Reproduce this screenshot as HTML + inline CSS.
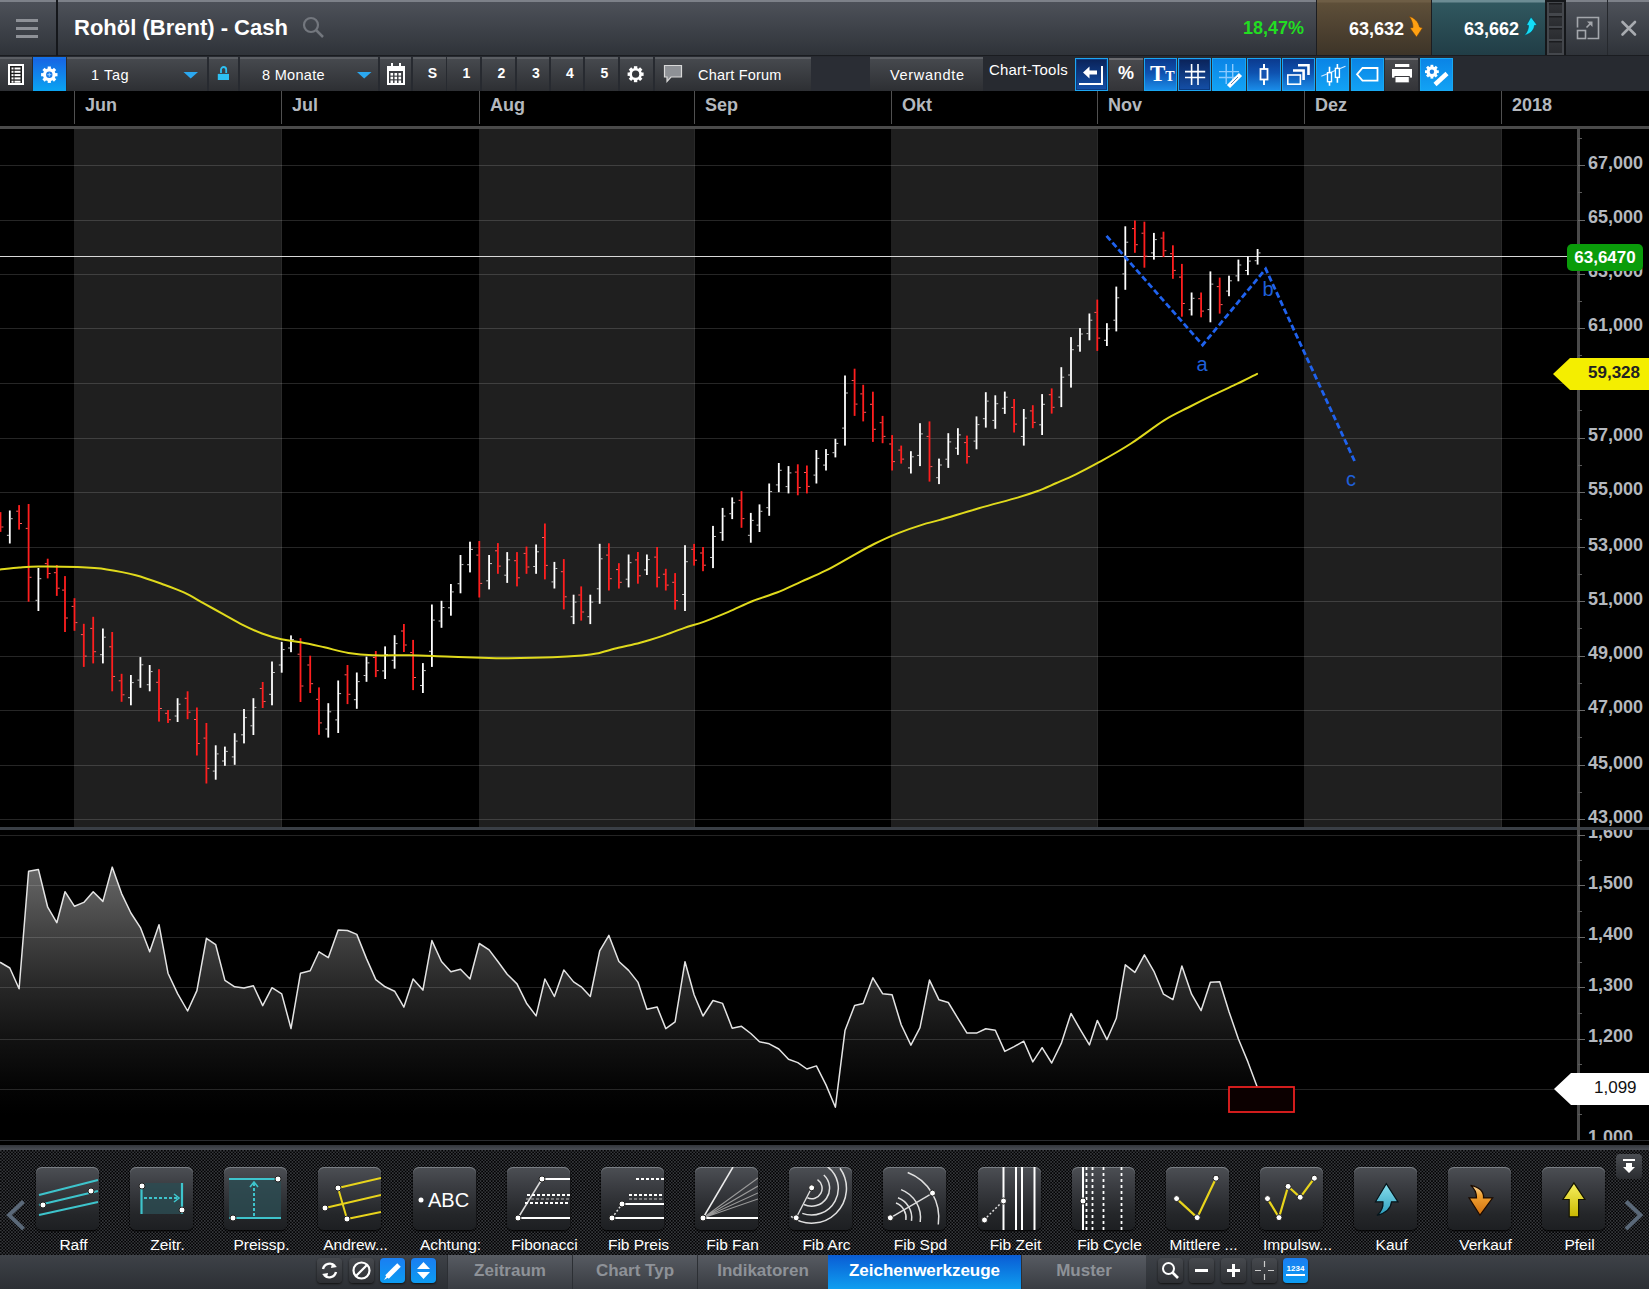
<!DOCTYPE html><html><head><meta charset="utf-8"><style>
*{margin:0;padding:0;box-sizing:border-box}
html,body{width:1649px;height:1289px;overflow:hidden;background:#000;font-family:"Liberation Sans",sans-serif}
.a{position:absolute}
#hdr{left:0;top:0;width:1649px;height:56px;background:linear-gradient(#4d5159,#2f3339);border-top:2px solid #7d8189;border-bottom:1px solid #1a1c20}
#tb{left:0;top:56px;width:1649px;height:35px;background:#272a30}
.btn{position:absolute;top:1px;height:34px;background:linear-gradient(#46494e,#2d2f33);border-top:2px solid #5d6065}
.txt{color:#fff;font-size:15px;white-space:nowrap}
#bt{left:0;top:1145px;width:1649px;height:110px;background:#1c1e21}
.ib{position:absolute;top:22px;width:63px;height:63px;border-radius:6px;background:linear-gradient(#44474c,#1d1f22);box-shadow:0 1px 2px #000}
.lbl{position:absolute;top:90px;width:94px;text-align:center;color:#fff;font-size:15px;white-space:nowrap;letter-spacing:-0.3px}
#tabs{left:0;top:1255px;width:1649px;height:34px;background:linear-gradient(#3c4046,#2c2f34)}
.tab{position:absolute;top:0;height:34px;background:linear-gradient(#4a4e54,#34373c);color:#8c9096;font-weight:bold;font-size:17px;text-align:center;line-height:32px;border-left:1px solid #2a2c30}
.sq{position:absolute;top:3px;width:25px;height:25px;border-radius:4px;background:linear-gradient(#45484d,#2b2d31);box-shadow:0 1px 1px #111}
.sqb{background:linear-gradient(#1a7ff0,#0a9af0)}
</style></head><body>
<div id="hdr" class="a">
</div>
<div class="a" style="left:16px;top:19px;width:22px;height:3px;background:#8e9197"></div>
<div class="a" style="left:16px;top:27px;width:22px;height:3px;background:#8e9197"></div>
<div class="a" style="left:16px;top:35px;width:22px;height:3px;background:#8e9197"></div>
<div class="a" style="left:56px;top:0;width:2px;height:56px;background:#15171b"></div>
<div class="a" style="left:74px;top:15px;font-size:22px;font-weight:bold;color:#fff;white-space:nowrap">Rohöl (Brent) - Cash</div>
<svg class="a" style="left:300px;top:14px" width="28" height="28"><circle cx="11" cy="11" r="7" fill="none" stroke="#73777e" stroke-width="2.2"/><line x1="16" y1="16" x2="23" y2="23" stroke="#73777e" stroke-width="2.5"/></svg>
<div class="a" style="left:1200px;top:18px;width:104px;text-align:right;font-size:18px;font-weight:bold;color:#22dd22">18,47%</div>
<div class="a" style="left:1316px;top:0;width:1px;height:56px;background:#1c1d20"></div>
<div class="a" style="left:1317px;top:0;width:114px;height:55px;background:linear-gradient(#6e5e46 0,#6e5e46 2px,#5e4f39 3px,#3d3428)"></div>
<div class="a" style="left:1340px;top:19px;width:64px;text-align:right;font-size:18px;font-weight:bold;color:#fff">63,632</div>
<svg class="a" style="left:1400px;top:10px" width="30" height="32"><path d="M9.3 6.4 C14 7.5 18.5 11.5 19.5 17 L22.5 18 L16.5 27 L10 18 L13 17.5 C13 13.5 11.5 9.5 9.3 6.4 Z" fill="#ffa012" stroke="#6a4010" stroke-width="0.6"/></svg>
<div class="a" style="left:1431px;top:0;width:1px;height:56px;background:#1c1d20"></div>
<div class="a" style="left:1432px;top:0;width:113px;height:55px;background:linear-gradient(#6c8c94 0,#6c8c94 2px,#30575f 3px,#213d46)"></div>
<div class="a" style="left:1455px;top:19px;width:64px;text-align:right;font-size:18px;font-weight:bold;color:#fff">63,662</div>
<svg class="a" style="left:1515px;top:10px" width="30" height="32"><path d="M16 7 L22 15 L19.5 15.5 C19 20 16 23.5 9.3 25.5 C12.5 22 13.5 18.5 13.5 15.5 L11.5 15 Z" fill="#14dcf6" stroke="#0a4050" stroke-width="0.6"/></svg>
<div class="a" style="left:1545px;top:0;width:21px;height:55px;background:#15171a"></div>
<div class="a" style="left:1547px;top:2px;width:17px;height:53px;background:#44474c"></div>
<div class="a" style="left:1549px;top:3px;width:13px;height:10px;background:linear-gradient(#1a1b1e 0,#1a1b1e 1px,#303236 2px,#2a2c30)"></div>
<div class="a" style="left:1549px;top:16px;width:13px;height:10px;background:linear-gradient(#1a1b1e 0,#1a1b1e 1px,#303236 2px,#2a2c30)"></div>
<div class="a" style="left:1549px;top:28px;width:13px;height:11px;background:linear-gradient(#1a1b1e 0,#1a1b1e 1px,#303236 2px,#2a2c30)"></div>
<div class="a" style="left:1549px;top:41px;width:13px;height:12px;background:linear-gradient(#1a1b1e 0,#1a1b1e 1px,#303236 2px,#2a2c30)"></div>
<div class="a" style="left:1607px;top:0;width:1px;height:55px;background:#25282d"></div>
<svg class="a" style="left:1570px;top:12px" width="36" height="32"><path d="M7.5 15.5 V5.5 H28.5 V26.5 H17.5" fill="none" stroke="#a4a7ac" stroke-width="1.6"/><rect x="7.5" y="18.5" width="8" height="8" fill="none" stroke="#a4a7ac" stroke-width="1.6"/><path d="M16.5 15.5 L21 11" stroke="#a4a7ac" stroke-width="1.6"/><path d="M17 9.5 H22.5 V15Z" fill="#a4a7ac"/></svg>
<svg class="a" style="left:1612px;top:12px" width="34" height="32"><path d="M10.5 10 L23 22.5 M23 10 L10.5 22.5" stroke="#a8abb0" stroke-width="2.6" stroke-linecap="round"/></svg>
<div id="tb" class="a"></div>
<div class="a" style="left:0px;top:57px;width:32px;height:34px;background:linear-gradient(#46494e,#2d2f33);border-top:2px solid #5b5e63;"></div>
<div class="a" style="left:33px;top:57px;width:33px;height:34px;background:linear-gradient(#46494e,#2d2f33);border-top:2px solid #5b5e63;background:linear-gradient(#1766e4,#0aa4f2);border-top:2px solid #1470e8"></div>
<div class="a" style="left:67px;top:57px;width:140px;height:34px;background:linear-gradient(#46494e,#2d2f33);border-top:2px solid #5b5e63;"></div>
<div class="a" style="left:209px;top:57px;width:29px;height:34px;background:linear-gradient(#46494e,#2d2f33);border-top:2px solid #5b5e63;"></div>
<div class="a" style="left:240px;top:57px;width:138px;height:34px;background:linear-gradient(#46494e,#2d2f33);border-top:2px solid #5b5e63;"></div>
<div class="a" style="left:380px;top:57px;width:31px;height:34px;background:linear-gradient(#46494e,#2d2f33);border-top:2px solid #5b5e63;"></div>
<div class="a" style="left:413px;top:57px;width:33px;height:34px;background:linear-gradient(#46494e,#2d2f33);border-top:2px solid #5b5e63;"></div>
<div class="a" style="left:447px;top:57px;width:33px;height:34px;background:linear-gradient(#46494e,#2d2f33);border-top:2px solid #5b5e63;"></div>
<div class="a" style="left:482px;top:57px;width:33px;height:34px;background:linear-gradient(#46494e,#2d2f33);border-top:2px solid #5b5e63;"></div>
<div class="a" style="left:517px;top:57px;width:32px;height:34px;background:linear-gradient(#46494e,#2d2f33);border-top:2px solid #5b5e63;"></div>
<div class="a" style="left:551px;top:57px;width:32px;height:34px;background:linear-gradient(#46494e,#2d2f33);border-top:2px solid #5b5e63;"></div>
<div class="a" style="left:585px;top:57px;width:33px;height:34px;background:linear-gradient(#46494e,#2d2f33);border-top:2px solid #5b5e63;"></div>
<div class="a" style="left:620px;top:57px;width:33px;height:34px;background:linear-gradient(#46494e,#2d2f33);border-top:2px solid #5b5e63;"></div>
<div class="a" style="left:655px;top:57px;width:156px;height:34px;background:linear-gradient(#46494e,#2d2f33);border-top:2px solid #5b5e63;"></div>
<div class="a" style="left:811px;top:57px;width:59px;height:34px;background:#2a2d34"></div>
<div class="a" style="left:870px;top:57px;width:113px;height:34px;background:linear-gradient(#46494e,#2d2f33);border-top:2px solid #5b5e63;"></div>
<div class="a" style="left:1075px;top:58px;width:33px;height:33px;background:linear-gradient(#0a2258,#1450a8);border:1.5px solid #1ea6f2;box-shadow:inset 0 0 0 1px #0a3a80"></div>
<div class="a" style="left:1109px;top:58px;width:34px;height:33px;background:linear-gradient(#48494d,#333438);border-top:2px solid #6a6b6f"></div>
<div class="a" style="left:1144px;top:58px;width:33px;height:33px;background:linear-gradient(#0b3a8e 0%,#0e52b0 45%,#1a8ce8 100%);border:1.5px solid #18a6f2"></div>
<div class="a" style="left:1178px;top:58px;width:33px;height:33px;background:linear-gradient(#0a2258,#1450a8);border:1.5px solid #1ea6f2;box-shadow:inset 0 0 0 1px #0a3a80"></div>
<div class="a" style="left:1212px;top:58px;width:34px;height:33px;background:linear-gradient(#0a84e6,#12a2f4);border:1.5px solid #18a8f2"></div>
<div class="a" style="left:1247px;top:58px;width:34px;height:33px;background:linear-gradient(#0b3a8e 0%,#0e52b0 45%,#1a8ce8 100%);border:1.5px solid #18a6f2"></div>
<div class="a" style="left:1282px;top:58px;width:33px;height:33px;background:linear-gradient(#0b3a8e 0%,#0e52b0 45%,#1a8ce8 100%);border:1.5px solid #18a6f2"></div>
<div class="a" style="left:1316px;top:58px;width:33px;height:33px;background:linear-gradient(#0a84e6,#12a2f4);border:1.5px solid #18a8f2"></div>
<div class="a" style="left:1351px;top:58px;width:33px;height:33px;background:linear-gradient(#0a84e6,#12a2f4);border:1.5px solid #18a8f2"></div>
<div class="a" style="left:1385px;top:58px;width:33px;height:33px;background:linear-gradient(#48494d,#333438);border-top:2px solid #6a6b6f"></div>
<div class="a" style="left:1420px;top:58px;width:33px;height:33px;background:linear-gradient(#0a84e6,#12a2f4);border:1.5px solid #18a8f2"></div>
<div class="a" style="left:91px;top:68px;color:#fff;font-size:14.5px;white-space:nowrap;line-height:1;letter-spacing:0.6px">1 Tag</div>
<div class="a" style="left:262px;top:68px;color:#fff;font-size:14.5px;white-space:nowrap;line-height:1;letter-spacing:0.3px">8 Monate</div>
<div class="a" style="left:416px;top:66px;width:33px;text-align:center;color:#fff;font-size:14px;font-weight:bold;line-height:1">S</div>
<div class="a" style="left:450px;top:66px;width:33px;text-align:center;color:#fff;font-size:14px;font-weight:bold;line-height:1">1</div>
<div class="a" style="left:485px;top:66px;width:33px;text-align:center;color:#fff;font-size:14px;font-weight:bold;line-height:1">2</div>
<div class="a" style="left:520px;top:66px;width:32px;text-align:center;color:#fff;font-size:14px;font-weight:bold;line-height:1">3</div>
<div class="a" style="left:554px;top:66px;width:32px;text-align:center;color:#fff;font-size:14px;font-weight:bold;line-height:1">4</div>
<div class="a" style="left:588px;top:66px;width:33px;text-align:center;color:#fff;font-size:14px;font-weight:bold;line-height:1">5</div>
<div class="a" style="left:698px;top:68px;color:#fff;font-size:14.5px;white-space:nowrap;line-height:1;letter-spacing:0.2px">Chart Forum</div>
<div class="a" style="left:890px;top:68px;color:#fff;font-size:14.5px;white-space:nowrap;line-height:1;letter-spacing:0.7px">Verwandte</div>
<div class="a" style="left:989px;top:62px;color:#fff;font-size:15px;white-space:nowrap;line-height:1;letter-spacing:0.2px">Chart-Tools</div>
<div class="a" style="left:1109px;top:64px;width:34px;text-align:center;color:#fff;font-weight:bold;font-size:18px;line-height:1">%</div>
<div class="a" style="left:1150px;top:62px;color:#fff;font-family:Liberation Serif;font-size:23px;line-height:1;font-weight:bold">T<span style="font-size:14px">T</span></div>
<svg class="a" style="left:0;top:0" width="1649" height="92"><rect x="9" y="65" width="14" height="19" fill="#1c1c1c" stroke="#fff" stroke-width="2"/><rect x="11.5" y="67.5" width="2" height="2" fill="#fff"/><rect x="14.5" y="67.5" width="6" height="2" fill="#fff"/><rect x="11.5" y="70.8" width="2" height="2" fill="#fff"/><rect x="14.5" y="70.8" width="6" height="2" fill="#fff"/><rect x="11.5" y="74.1" width="2" height="2" fill="#fff"/><rect x="14.5" y="74.1" width="6" height="2" fill="#fff"/><rect x="11.5" y="77.4" width="2" height="2" fill="#fff"/><rect x="14.5" y="77.4" width="6" height="2" fill="#fff"/><rect x="11.5" y="80.7" width="2" height="2" fill="#fff"/><rect x="14.5" y="80.7" width="6" height="2" fill="#fff"/><g fill="#fff"><rect x="47.70" y="66.50" width="3.20" height="16.40" transform="rotate(0.0 49.3 74.7)"/><rect x="47.70" y="66.50" width="3.20" height="16.40" transform="rotate(45.0 49.3 74.7)"/><rect x="47.70" y="66.50" width="3.20" height="16.40" transform="rotate(90.0 49.3 74.7)"/><rect x="47.70" y="66.50" width="3.20" height="16.40" transform="rotate(135.0 49.3 74.7)"/><circle cx="49.3" cy="74.7" r="6.40"/></g><circle cx="49.3" cy="74.7" r="3.2" fill="#1a7ae8"/><path d="M47.3 74.7 H51.3 M49.3 72.7 V76.7" stroke="#9cd0ff" stroke-width="1"/><path d="M183.5 72 H198 L190.7 78.5Z" fill="#2ba8f0"/><path d="M357 72 H371.5 L364.2 78.5Z" fill="#2ba8f0"/><path d="M221 73 V69.6 a2.6 2.6 0 0 1 5.2 0 V73" fill="none" stroke="#2ec0f2" stroke-width="1.8"/><rect x="217.8" y="73.9" width="11.2" height="6.1" fill="#2ec0f2"/><rect x="388" y="67" width="16" height="17" fill="none" stroke="#fff" stroke-width="2"/><rect x="388" y="67" width="16" height="4" fill="#fff"/><rect x="391" y="63" width="2" height="6" fill="#fff"/><rect x="399" y="63" width="2" height="6" fill="#fff"/><rect x="390.5" y="73.0" width="2.6" height="2.6" fill="#fff"/><rect x="394.5" y="73.0" width="2.6" height="2.6" fill="#fff"/><rect x="398.5" y="73.0" width="2.6" height="2.6" fill="#fff"/><rect x="390.5" y="76.7" width="2.6" height="2.6" fill="#fff"/><rect x="394.5" y="76.7" width="2.6" height="2.6" fill="#fff"/><rect x="398.5" y="76.7" width="2.6" height="2.6" fill="#fff"/><rect x="390.5" y="80.4" width="2.6" height="2.6" fill="#fff"/><rect x="394.5" y="80.4" width="2.6" height="2.6" fill="#fff"/><rect x="398.5" y="80.4" width="2.6" height="2.6" fill="#fff"/><g fill="#fff"><rect x="633.90" y="66.20" width="3.40" height="16.00" transform="rotate(0.0 635.6 74.2)"/><rect x="633.90" y="66.20" width="3.40" height="16.00" transform="rotate(45.0 635.6 74.2)"/><rect x="633.90" y="66.20" width="3.40" height="16.00" transform="rotate(90.0 635.6 74.2)"/><rect x="633.90" y="66.20" width="3.40" height="16.00" transform="rotate(135.0 635.6 74.2)"/><circle cx="635.6" cy="74.2" r="6.24"/></g><circle cx="635.6" cy="74.2" r="3.6" fill="#37393d"/><path d="M664.5 65.5 H681.5 V77 H671 L667 81.5 V77 H664.5Z" fill="#8e9196" stroke="#d8d8d8" stroke-width="1.2"/><path d="M1083 72.6 L1089.5 66.6 V70.6 H1097 V74.6 H1089.5 V78.6Z" fill="#fff"/><path d="M1079 84 H1102 V66" fill="none" stroke="#fff" stroke-width="2"/><path d="M1191.6 64 V85 M1198 64 V85 M1185 71.6 H1205.2 M1185 77.5 H1205.2" stroke="#fff" stroke-width="1.6"/><path d="M1226.2 64 V84 M1232.7 64 V82 M1219 71.6 H1239 M1219 77.5 H1236" stroke="#8ccaff" stroke-width="1.4"/><path d="M1228.5 86.5 L1240.5 74.5" stroke="#fff" stroke-width="4.5"/><path d="M1231 84 L1238 77" stroke="#3a6a9a" stroke-width="0.8"/><path d="M1264 64 V85" stroke="#fff" stroke-width="2"/><rect x="1260.5" y="69" width="7" height="10.5" fill="#1452b0" stroke="#fff" stroke-width="1.8"/><path d="M1298 65.3 H1308.5 V75" fill="none" stroke="#fff" stroke-width="2.6"/><path d="M1293 70.5 H1303.6 V80" fill="none" stroke="#fff" stroke-width="2.6"/><rect x="1287.8" y="75" width="12.6" height="9.2" fill="none" stroke="#fff" stroke-width="1.6"/><path d="M1321.3 76.3 L1345.5 66.2" stroke="#cfe8ff" stroke-width="1.2"/><path d="M1329.5 66.8 V85.8 M1337.4 63.9 V82.8" stroke="#fff" stroke-width="1.6"/><rect x="1327.5" y="72.7" width="4" height="9" fill="#0c8ae8" stroke="#fff" stroke-width="1.4"/><rect x="1335.4" y="68.4" width="4" height="9" fill="#0c8ae8" stroke="#fff" stroke-width="1.4"/><path d="M1357 74.3 L1362.5 68 H1377.5 V80.7 H1362.5Z" fill="none" stroke="#fff" stroke-width="1.8"/><rect x="1395" y="64" width="14.3" height="3" fill="#fff"/><rect x="1392" y="69" width="20" height="8.6" fill="#fff"/><rect x="1395" y="76.5" width="14.3" height="6.4" fill="#fff" stroke="#3a3b3f" stroke-width="1"/><g fill="#fff"><rect x="1430.50" y="64.80" width="2.80" height="13.80" transform="rotate(0.0 1431.9 71.7)"/><rect x="1430.50" y="64.80" width="2.80" height="13.80" transform="rotate(45.0 1431.9 71.7)"/><rect x="1430.50" y="64.80" width="2.80" height="13.80" transform="rotate(90.0 1431.9 71.7)"/><rect x="1430.50" y="64.80" width="2.80" height="13.80" transform="rotate(135.0 1431.9 71.7)"/><circle cx="1431.9" cy="71.7" r="5.38"/></g><circle cx="1431.9" cy="71.7" r="2.2" fill="#1a80e0"/><path d="M1435 84.5 L1447 73.5" stroke="#fff" stroke-width="4.5"/></svg>
<svg class="a" style="left:0;top:0" width="1649" height="1289">
<defs><linearGradient id="ig" gradientUnits="userSpaceOnUse" x1="0" y1="865" x2="0" y2="1115"><stop offset="0" stop-color="#686868"/><stop offset="0.288" stop-color="#404040"/><stop offset="0.488" stop-color="#272727"/><stop offset="0.696" stop-color="#121212"/><stop offset="0.896" stop-color="#040404"/><stop offset="1" stop-color="#000"/></linearGradient>
<clipPath id="cc"><rect x="0" y="129" width="1578" height="698"/></clipPath><clipPath id="ic"><rect x="0" y="830" width="1649" height="310"/></clipPath></defs>
<rect x="0" y="91" width="1649" height="36" fill="#000"/>
<rect x="0" y="126" width="1649" height="3" fill="#4a4a4a"/>
<rect x="74" y="91" width="1" height="33" fill="#505050"/>
<rect x="281" y="91" width="1" height="33" fill="#505050"/>
<rect x="479" y="91" width="1" height="33" fill="#505050"/>
<rect x="694" y="91" width="1" height="33" fill="#505050"/>
<rect x="891" y="91" width="1" height="33" fill="#505050"/>
<rect x="1097" y="91" width="1" height="33" fill="#505050"/>
<rect x="1304" y="91" width="1" height="33" fill="#505050"/>
<rect x="1501" y="91" width="1" height="33" fill="#505050"/>
<rect x="0" y="129" width="1649" height="698" fill="#000"/>
<rect x="74" y="129" width="207" height="698" fill="#1f1f1f"/>
<rect x="281" y="129" width="1" height="698" fill="#2a2a2a"/>
<rect x="479" y="129" width="215" height="698" fill="#1f1f1f"/>
<rect x="694" y="129" width="1" height="698" fill="#2a2a2a"/>
<rect x="891" y="129" width="206" height="698" fill="#1f1f1f"/>
<rect x="1097" y="129" width="1" height="698" fill="#2a2a2a"/>
<rect x="1304" y="129" width="197" height="698" fill="#1f1f1f"/>
<rect x="1501" y="129" width="1" height="698" fill="#2a2a2a"/>
<rect x="0" y="165" width="1578" height="1" fill="#fff" fill-opacity="0.15"/>
<rect x="0" y="220" width="1578" height="1" fill="#fff" fill-opacity="0.15"/>
<rect x="0" y="274" width="1578" height="1" fill="#fff" fill-opacity="0.15"/>
<rect x="0" y="328" width="1578" height="1" fill="#fff" fill-opacity="0.15"/>
<rect x="0" y="383" width="1578" height="1" fill="#fff" fill-opacity="0.15"/>
<rect x="0" y="438" width="1578" height="1" fill="#fff" fill-opacity="0.15"/>
<rect x="0" y="492" width="1578" height="1" fill="#fff" fill-opacity="0.15"/>
<rect x="0" y="547" width="1578" height="1" fill="#fff" fill-opacity="0.15"/>
<rect x="0" y="601" width="1578" height="1" fill="#fff" fill-opacity="0.15"/>
<rect x="0" y="656" width="1578" height="1" fill="#fff" fill-opacity="0.15"/>
<rect x="0" y="710" width="1578" height="1" fill="#fff" fill-opacity="0.15"/>
<rect x="0" y="765" width="1578" height="1" fill="#fff" fill-opacity="0.15"/>
<rect x="0" y="819" width="1578" height="1" fill="#fff" fill-opacity="0.15"/>
<rect x="0" y="256" width="1578" height="1" fill="#d8d8d8"/>
<g clip-path="url(#cc)">
<rect x="-0.4" y="512.1" width="1.8" height="19.8" fill="#ff1e1e"/>
<rect x="-2.4" y="516.5" width="2" height="1" fill="#ff6060"/>
<rect x="1.4" y="526.5" width="2" height="1" fill="#ff6060"/>
<rect x="8.9" y="510.5" width="1.8" height="33.0" fill="#ffffff"/>
<rect x="6.9" y="534.8" width="2" height="1" fill="#c8c8c8"/>
<rect x="10.7" y="518.2" width="2" height="1" fill="#c8c8c8"/>
<rect x="18.2" y="505.1" width="1.8" height="24.5" fill="#ff1e1e"/>
<rect x="16.2" y="510.7" width="2" height="1" fill="#ff6060"/>
<rect x="20.0" y="523.0" width="2" height="1" fill="#ff6060"/>
<rect x="27.7" y="504.0" width="1.8" height="97.7" fill="#ff1e1e"/>
<rect x="25.7" y="527.9" width="2" height="1" fill="#ff6060"/>
<rect x="29.5" y="576.8" width="2" height="1" fill="#ff6060"/>
<rect x="37.5" y="568.0" width="1.8" height="43.0" fill="#ffffff"/>
<rect x="35.5" y="599.8" width="2" height="1" fill="#c8c8c8"/>
<rect x="39.3" y="578.2" width="2" height="1" fill="#c8c8c8"/>
<rect x="46.8" y="558.7" width="1.8" height="19.7" fill="#ff1e1e"/>
<rect x="44.8" y="563.1" width="2" height="1" fill="#ff6060"/>
<rect x="48.6" y="573.0" width="2" height="1" fill="#ff6060"/>
<rect x="55.9" y="565.0" width="1.8" height="30.9" fill="#ff1e1e"/>
<rect x="53.9" y="572.2" width="2" height="1" fill="#ff6060"/>
<rect x="57.7" y="587.7" width="2" height="1" fill="#ff6060"/>
<rect x="64.1" y="576.1" width="1.8" height="55.9" fill="#ff1e1e"/>
<rect x="62.1" y="589.6" width="2" height="1" fill="#ff6060"/>
<rect x="65.9" y="617.5" width="2" height="1" fill="#ff6060"/>
<rect x="73.6" y="598.2" width="1.8" height="32.6" fill="#ff1e1e"/>
<rect x="71.6" y="605.9" width="2" height="1" fill="#ff6060"/>
<rect x="75.4" y="622.1" width="2" height="1" fill="#ff6060"/>
<rect x="82.9" y="623.8" width="1.8" height="43.1" fill="#ff1e1e"/>
<rect x="80.9" y="634.1" width="2" height="1" fill="#ff6060"/>
<rect x="84.7" y="655.6" width="2" height="1" fill="#ff6060"/>
<rect x="92.3" y="616.8" width="1.8" height="46.6" fill="#ff1e1e"/>
<rect x="90.3" y="627.9" width="2" height="1" fill="#ff6060"/>
<rect x="94.1" y="651.2" width="2" height="1" fill="#ff6060"/>
<rect x="102.0" y="628.5" width="1.8" height="34.9" fill="#ffffff"/>
<rect x="100.0" y="654.2" width="2" height="1" fill="#c8c8c8"/>
<rect x="103.8" y="636.7" width="2" height="1" fill="#c8c8c8"/>
<rect x="111.3" y="632.0" width="1.8" height="59.3" fill="#ff1e1e"/>
<rect x="109.3" y="646.3" width="2" height="1" fill="#ff6060"/>
<rect x="113.1" y="676.0" width="2" height="1" fill="#ff6060"/>
<rect x="120.7" y="673.8" width="1.8" height="28.0" fill="#ff1e1e"/>
<rect x="118.7" y="680.3" width="2" height="1" fill="#ff6060"/>
<rect x="122.5" y="694.3" width="2" height="1" fill="#ff6060"/>
<rect x="130.0" y="675.0" width="1.8" height="30.3" fill="#ffffff"/>
<rect x="128.0" y="697.2" width="2" height="1" fill="#c8c8c8"/>
<rect x="131.8" y="682.1" width="2" height="1" fill="#c8c8c8"/>
<rect x="139.5" y="657.1" width="1.8" height="30.7" fill="#ffffff"/>
<rect x="137.5" y="679.6" width="2" height="1" fill="#c8c8c8"/>
<rect x="141.3" y="664.3" width="2" height="1" fill="#c8c8c8"/>
<rect x="148.8" y="665.0" width="1.8" height="26.3" fill="#ffffff"/>
<rect x="146.8" y="684.2" width="2" height="1" fill="#c8c8c8"/>
<rect x="150.6" y="671.1" width="2" height="1" fill="#c8c8c8"/>
<rect x="158.1" y="669.2" width="1.8" height="52.4" fill="#ff1e1e"/>
<rect x="156.1" y="681.8" width="2" height="1" fill="#ff6060"/>
<rect x="159.9" y="708.0" width="2" height="1" fill="#ff6060"/>
<rect x="167.1" y="710.0" width="1.8" height="13.0" fill="#ff1e1e"/>
<rect x="165.1" y="712.8" width="2" height="1" fill="#ff6060"/>
<rect x="168.9" y="719.2" width="2" height="1" fill="#ff6060"/>
<rect x="176.7" y="698.2" width="1.8" height="23.8" fill="#ffffff"/>
<rect x="174.7" y="715.5" width="2" height="1" fill="#c8c8c8"/>
<rect x="178.5" y="703.7" width="2" height="1" fill="#c8c8c8"/>
<rect x="186.7" y="691.3" width="1.8" height="27.9" fill="#ff1e1e"/>
<rect x="184.7" y="697.8" width="2" height="1" fill="#ff6060"/>
<rect x="188.5" y="711.7" width="2" height="1" fill="#ff6060"/>
<rect x="196.0" y="707.5" width="1.8" height="48.0" fill="#ff1e1e"/>
<rect x="194.0" y="719.0" width="2" height="1" fill="#ff6060"/>
<rect x="197.8" y="743.0" width="2" height="1" fill="#ff6060"/>
<rect x="205.5" y="723.0" width="1.8" height="60.5" fill="#ff1e1e"/>
<rect x="203.5" y="737.6" width="2" height="1" fill="#ff6060"/>
<rect x="207.3" y="767.9" width="2" height="1" fill="#ff6060"/>
<rect x="214.8" y="745.3" width="1.8" height="34.4" fill="#ffffff"/>
<rect x="212.8" y="770.6" width="2" height="1" fill="#c8c8c8"/>
<rect x="216.6" y="753.4" width="2" height="1" fill="#c8c8c8"/>
<rect x="224.0" y="746.6" width="1.8" height="19.2" fill="#ffffff"/>
<rect x="222.0" y="760.5" width="2" height="1" fill="#c8c8c8"/>
<rect x="225.8" y="750.9" width="2" height="1" fill="#c8c8c8"/>
<rect x="233.8" y="733.2" width="1.8" height="31.6" fill="#ffffff"/>
<rect x="231.8" y="756.4" width="2" height="1" fill="#c8c8c8"/>
<rect x="235.6" y="740.6" width="2" height="1" fill="#c8c8c8"/>
<rect x="243.1" y="709.0" width="1.8" height="34.4" fill="#ffffff"/>
<rect x="241.1" y="734.3" width="2" height="1" fill="#c8c8c8"/>
<rect x="244.9" y="717.1" width="2" height="1" fill="#c8c8c8"/>
<rect x="252.5" y="698.2" width="1.8" height="36.8" fill="#ffffff"/>
<rect x="250.5" y="725.3" width="2" height="1" fill="#c8c8c8"/>
<rect x="254.3" y="706.9" width="2" height="1" fill="#c8c8c8"/>
<rect x="261.8" y="682.0" width="1.8" height="26.0" fill="#ff1e1e"/>
<rect x="259.8" y="688.0" width="2" height="1" fill="#ff6060"/>
<rect x="263.6" y="701.0" width="2" height="1" fill="#ff6060"/>
<rect x="271.1" y="661.5" width="1.8" height="43.8" fill="#ffffff"/>
<rect x="269.1" y="693.8" width="2" height="1" fill="#c8c8c8"/>
<rect x="272.9" y="672.0" width="2" height="1" fill="#c8c8c8"/>
<rect x="280.8" y="641.9" width="1.8" height="30.8" fill="#ffffff"/>
<rect x="278.8" y="664.5" width="2" height="1" fill="#c8c8c8"/>
<rect x="282.6" y="649.1" width="2" height="1" fill="#c8c8c8"/>
<rect x="290.1" y="635.4" width="1.8" height="16.8" fill="#ffffff"/>
<rect x="288.1" y="647.5" width="2" height="1" fill="#c8c8c8"/>
<rect x="291.9" y="639.1" width="2" height="1" fill="#c8c8c8"/>
<rect x="299.6" y="638.2" width="1.8" height="63.8" fill="#ff1e1e"/>
<rect x="297.6" y="653.7" width="2" height="1" fill="#ff6060"/>
<rect x="301.4" y="685.5" width="2" height="1" fill="#ff6060"/>
<rect x="309.3" y="655.7" width="1.8" height="37.3" fill="#ff1e1e"/>
<rect x="307.3" y="664.5" width="2" height="1" fill="#ff6060"/>
<rect x="311.1" y="683.2" width="2" height="1" fill="#ff6060"/>
<rect x="318.1" y="687.4" width="1.8" height="47.4" fill="#ff1e1e"/>
<rect x="316.1" y="698.8" width="2" height="1" fill="#ff6060"/>
<rect x="319.9" y="722.4" width="2" height="1" fill="#ff6060"/>
<rect x="327.4" y="703.2" width="1.8" height="34.4" fill="#ffffff"/>
<rect x="325.4" y="728.5" width="2" height="1" fill="#c8c8c8"/>
<rect x="329.2" y="711.3" width="2" height="1" fill="#c8c8c8"/>
<rect x="337.3" y="680.5" width="1.8" height="52.5" fill="#ffffff"/>
<rect x="335.3" y="719.4" width="2" height="1" fill="#c8c8c8"/>
<rect x="339.1" y="693.1" width="2" height="1" fill="#c8c8c8"/>
<rect x="346.6" y="665.0" width="1.8" height="39.1" fill="#ff1e1e"/>
<rect x="344.6" y="674.3" width="2" height="1" fill="#ff6060"/>
<rect x="348.4" y="693.8" width="2" height="1" fill="#ff6060"/>
<rect x="355.9" y="672.5" width="1.8" height="36.3" fill="#ffffff"/>
<rect x="353.9" y="699.2" width="2" height="1" fill="#c8c8c8"/>
<rect x="357.7" y="681.1" width="2" height="1" fill="#c8c8c8"/>
<rect x="365.6" y="656.6" width="1.8" height="25.2" fill="#ffffff"/>
<rect x="363.6" y="675.0" width="2" height="1" fill="#c8c8c8"/>
<rect x="367.4" y="662.4" width="2" height="1" fill="#c8c8c8"/>
<rect x="374.9" y="651.0" width="1.8" height="26.1" fill="#ff1e1e"/>
<rect x="372.9" y="657.0" width="2" height="1" fill="#ff6060"/>
<rect x="376.7" y="670.1" width="2" height="1" fill="#ff6060"/>
<rect x="384.2" y="646.4" width="1.8" height="32.6" fill="#ffffff"/>
<rect x="382.2" y="670.4" width="2" height="1" fill="#c8c8c8"/>
<rect x="386.0" y="654.0" width="2" height="1" fill="#c8c8c8"/>
<rect x="393.7" y="635.2" width="1.8" height="33.5" fill="#ffffff"/>
<rect x="391.7" y="659.8" width="2" height="1" fill="#c8c8c8"/>
<rect x="395.5" y="643.1" width="2" height="1" fill="#c8c8c8"/>
<rect x="403.0" y="624.0" width="1.8" height="28.0" fill="#ff1e1e"/>
<rect x="401.0" y="630.5" width="2" height="1" fill="#ff6060"/>
<rect x="404.8" y="644.5" width="2" height="1" fill="#ff6060"/>
<rect x="412.2" y="639.9" width="1.8" height="50.2" fill="#ff1e1e"/>
<rect x="410.2" y="652.0" width="2" height="1" fill="#ff6060"/>
<rect x="414.0" y="677.0" width="2" height="1" fill="#ff6060"/>
<rect x="422.0" y="663.1" width="1.8" height="29.9" fill="#ffffff"/>
<rect x="420.0" y="685.0" width="2" height="1" fill="#c8c8c8"/>
<rect x="423.8" y="670.1" width="2" height="1" fill="#c8c8c8"/>
<rect x="431.0" y="604.5" width="1.8" height="62.4" fill="#ffffff"/>
<rect x="429.0" y="650.8" width="2" height="1" fill="#c8c8c8"/>
<rect x="432.8" y="619.6" width="2" height="1" fill="#c8c8c8"/>
<rect x="440.6" y="600.8" width="1.8" height="27.0" fill="#ffffff"/>
<rect x="438.6" y="620.5" width="2" height="1" fill="#c8c8c8"/>
<rect x="442.4" y="607.0" width="2" height="1" fill="#c8c8c8"/>
<rect x="450.0" y="584.0" width="1.8" height="31.7" fill="#ffffff"/>
<rect x="448.0" y="607.3" width="2" height="1" fill="#c8c8c8"/>
<rect x="451.8" y="591.4" width="2" height="1" fill="#c8c8c8"/>
<rect x="459.6" y="555.0" width="1.8" height="38.3" fill="#ffffff"/>
<rect x="457.6" y="583.2" width="2" height="1" fill="#c8c8c8"/>
<rect x="461.4" y="564.1" width="2" height="1" fill="#c8c8c8"/>
<rect x="469.1" y="541.7" width="1.8" height="30.7" fill="#ffffff"/>
<rect x="467.1" y="564.2" width="2" height="1" fill="#c8c8c8"/>
<rect x="470.9" y="548.9" width="2" height="1" fill="#c8c8c8"/>
<rect x="478.4" y="541.0" width="1.8" height="56.5" fill="#ff1e1e"/>
<rect x="476.4" y="554.6" width="2" height="1" fill="#ff6060"/>
<rect x="480.2" y="582.9" width="2" height="1" fill="#ff6060"/>
<rect x="488.2" y="555.0" width="1.8" height="34.4" fill="#ffffff"/>
<rect x="486.2" y="580.3" width="2" height="1" fill="#c8c8c8"/>
<rect x="490.0" y="563.1" width="2" height="1" fill="#c8c8c8"/>
<rect x="497.0" y="543.1" width="1.8" height="30.7" fill="#ff1e1e"/>
<rect x="495.0" y="550.3" width="2" height="1" fill="#ff6060"/>
<rect x="498.8" y="565.6" width="2" height="1" fill="#ff6060"/>
<rect x="506.3" y="552.1" width="1.8" height="30.8" fill="#ffffff"/>
<rect x="504.3" y="574.7" width="2" height="1" fill="#c8c8c8"/>
<rect x="508.1" y="559.3" width="2" height="1" fill="#c8c8c8"/>
<rect x="516.1" y="552.1" width="1.8" height="34.3" fill="#ff1e1e"/>
<rect x="514.1" y="560.2" width="2" height="1" fill="#ff6060"/>
<rect x="517.9" y="577.3" width="2" height="1" fill="#ff6060"/>
<rect x="525.6" y="546.6" width="1.8" height="27.2" fill="#ff1e1e"/>
<rect x="523.6" y="552.9" width="2" height="1" fill="#ff6060"/>
<rect x="527.4" y="566.5" width="2" height="1" fill="#ff6060"/>
<rect x="535.2" y="544.5" width="1.8" height="29.3" fill="#ffffff"/>
<rect x="533.2" y="566.0" width="2" height="1" fill="#c8c8c8"/>
<rect x="537.0" y="551.3" width="2" height="1" fill="#c8c8c8"/>
<rect x="544.0" y="523.5" width="1.8" height="55.9" fill="#ff1e1e"/>
<rect x="542.0" y="537.0" width="2" height="1" fill="#ff6060"/>
<rect x="545.8" y="564.9" width="2" height="1" fill="#ff6060"/>
<rect x="553.5" y="561.9" width="1.8" height="26.6" fill="#ffffff"/>
<rect x="551.5" y="581.4" width="2" height="1" fill="#c8c8c8"/>
<rect x="555.3" y="568.0" width="2" height="1" fill="#c8c8c8"/>
<rect x="562.9" y="559.1" width="1.8" height="50.3" fill="#ff1e1e"/>
<rect x="560.9" y="571.2" width="2" height="1" fill="#ff6060"/>
<rect x="564.7" y="596.3" width="2" height="1" fill="#ff6060"/>
<rect x="572.7" y="594.7" width="1.8" height="29.4" fill="#ffffff"/>
<rect x="570.7" y="616.2" width="2" height="1" fill="#c8c8c8"/>
<rect x="574.5" y="601.6" width="2" height="1" fill="#c8c8c8"/>
<rect x="580.3" y="586.4" width="1.8" height="34.2" fill="#ff1e1e"/>
<rect x="578.3" y="594.5" width="2" height="1" fill="#ff6060"/>
<rect x="582.1" y="611.5" width="2" height="1" fill="#ff6060"/>
<rect x="589.4" y="594.7" width="1.8" height="29.4" fill="#ffffff"/>
<rect x="587.4" y="616.2" width="2" height="1" fill="#c8c8c8"/>
<rect x="591.2" y="601.6" width="2" height="1" fill="#c8c8c8"/>
<rect x="598.8" y="543.8" width="1.8" height="60.0" fill="#ffffff"/>
<rect x="596.8" y="588.3" width="2" height="1" fill="#c8c8c8"/>
<rect x="600.6" y="558.3" width="2" height="1" fill="#c8c8c8"/>
<rect x="608.0" y="543.3" width="1.8" height="47.2" fill="#ff1e1e"/>
<rect x="606.0" y="554.6" width="2" height="1" fill="#ff6060"/>
<rect x="609.8" y="578.2" width="2" height="1" fill="#ff6060"/>
<rect x="618.0" y="563.2" width="1.8" height="25.4" fill="#ff1e1e"/>
<rect x="616.0" y="569.1" width="2" height="1" fill="#ff6060"/>
<rect x="619.8" y="581.8" width="2" height="1" fill="#ff6060"/>
<rect x="627.7" y="554.5" width="1.8" height="32.9" fill="#ffffff"/>
<rect x="625.7" y="578.7" width="2" height="1" fill="#c8c8c8"/>
<rect x="629.5" y="562.2" width="2" height="1" fill="#c8c8c8"/>
<rect x="637.0" y="552.0" width="1.8" height="31.7" fill="#ff1e1e"/>
<rect x="635.0" y="559.4" width="2" height="1" fill="#ff6060"/>
<rect x="638.8" y="575.3" width="2" height="1" fill="#ff6060"/>
<rect x="646.0" y="554.5" width="1.8" height="20.5" fill="#ffffff"/>
<rect x="644.0" y="569.4" width="2" height="1" fill="#c8c8c8"/>
<rect x="647.8" y="559.1" width="2" height="1" fill="#c8c8c8"/>
<rect x="656.2" y="547.0" width="1.8" height="40.4" fill="#ff1e1e"/>
<rect x="654.2" y="556.6" width="2" height="1" fill="#ff6060"/>
<rect x="658.0" y="576.8" width="2" height="1" fill="#ff6060"/>
<rect x="664.9" y="568.8" width="1.8" height="21.7" fill="#ff1e1e"/>
<rect x="662.9" y="573.7" width="2" height="1" fill="#ff6060"/>
<rect x="666.7" y="584.6" width="2" height="1" fill="#ff6060"/>
<rect x="674.2" y="573.1" width="1.8" height="36.6" fill="#ff1e1e"/>
<rect x="672.2" y="581.8" width="2" height="1" fill="#ff6060"/>
<rect x="676.0" y="600.1" width="2" height="1" fill="#ff6060"/>
<rect x="684.1" y="545.2" width="1.8" height="65.8" fill="#ffffff"/>
<rect x="682.1" y="594.0" width="2" height="1" fill="#c8c8c8"/>
<rect x="685.9" y="561.2" width="2" height="1" fill="#c8c8c8"/>
<rect x="693.2" y="543.9" width="1.8" height="21.7" fill="#ff1e1e"/>
<rect x="691.2" y="548.8" width="2" height="1" fill="#ff6060"/>
<rect x="695.0" y="559.7" width="2" height="1" fill="#ff6060"/>
<rect x="702.1" y="547.0" width="1.8" height="24.2" fill="#ff1e1e"/>
<rect x="700.1" y="552.5" width="2" height="1" fill="#ff6060"/>
<rect x="703.9" y="564.7" width="2" height="1" fill="#ff6060"/>
<rect x="712.1" y="525.9" width="1.8" height="42.2" fill="#ffffff"/>
<rect x="710.1" y="557.0" width="2" height="1" fill="#c8c8c8"/>
<rect x="713.9" y="536.0" width="2" height="1" fill="#c8c8c8"/>
<rect x="721.7" y="507.9" width="1.8" height="32.9" fill="#ffffff"/>
<rect x="719.7" y="532.1" width="2" height="1" fill="#c8c8c8"/>
<rect x="723.5" y="515.6" width="2" height="1" fill="#c8c8c8"/>
<rect x="731.3" y="497.4" width="1.8" height="21.7" fill="#ffffff"/>
<rect x="729.3" y="513.2" width="2" height="1" fill="#c8c8c8"/>
<rect x="733.1" y="502.3" width="2" height="1" fill="#c8c8c8"/>
<rect x="740.6" y="491.2" width="1.8" height="36.6" fill="#ff1e1e"/>
<rect x="738.6" y="499.8" width="2" height="1" fill="#ff6060"/>
<rect x="742.4" y="518.1" width="2" height="1" fill="#ff6060"/>
<rect x="749.9" y="512.9" width="1.8" height="29.8" fill="#ffffff"/>
<rect x="747.9" y="534.8" width="2" height="1" fill="#c8c8c8"/>
<rect x="751.7" y="519.9" width="2" height="1" fill="#c8c8c8"/>
<rect x="758.6" y="504.4" width="1.8" height="27.6" fill="#ffffff"/>
<rect x="756.6" y="524.6" width="2" height="1" fill="#c8c8c8"/>
<rect x="760.4" y="510.8" width="2" height="1" fill="#c8c8c8"/>
<rect x="768.3" y="483.5" width="1.8" height="32.3" fill="#ffffff"/>
<rect x="766.3" y="507.2" width="2" height="1" fill="#c8c8c8"/>
<rect x="770.1" y="491.1" width="2" height="1" fill="#c8c8c8"/>
<rect x="777.9" y="463.0" width="1.8" height="29.2" fill="#ffffff"/>
<rect x="775.9" y="484.4" width="2" height="1" fill="#c8c8c8"/>
<rect x="779.7" y="469.8" width="2" height="1" fill="#c8c8c8"/>
<rect x="787.6" y="466.1" width="1.8" height="27.3" fill="#ffffff"/>
<rect x="785.6" y="486.1" width="2" height="1" fill="#c8c8c8"/>
<rect x="789.4" y="472.4" width="2" height="1" fill="#c8c8c8"/>
<rect x="796.9" y="464.3" width="1.8" height="31.0" fill="#ff1e1e"/>
<rect x="794.9" y="471.6" width="2" height="1" fill="#ff6060"/>
<rect x="798.7" y="487.1" width="2" height="1" fill="#ff6060"/>
<rect x="806.0" y="465.5" width="1.8" height="27.9" fill="#ff1e1e"/>
<rect x="804.0" y="472.0" width="2" height="1" fill="#ff6060"/>
<rect x="807.8" y="485.9" width="2" height="1" fill="#ff6060"/>
<rect x="815.5" y="450.0" width="1.8" height="33.5" fill="#ffffff"/>
<rect x="813.5" y="474.6" width="2" height="1" fill="#c8c8c8"/>
<rect x="817.3" y="457.9" width="2" height="1" fill="#c8c8c8"/>
<rect x="825.1" y="449.1" width="1.8" height="21.4" fill="#ffffff"/>
<rect x="823.1" y="464.6" width="2" height="1" fill="#c8c8c8"/>
<rect x="826.9" y="454.0" width="2" height="1" fill="#c8c8c8"/>
<rect x="834.5" y="438.8" width="1.8" height="18.6" fill="#ffffff"/>
<rect x="832.5" y="452.2" width="2" height="1" fill="#c8c8c8"/>
<rect x="836.3" y="442.9" width="2" height="1" fill="#c8c8c8"/>
<rect x="844.1" y="375.5" width="1.8" height="70.1" fill="#ffffff"/>
<rect x="842.1" y="427.6" width="2" height="1" fill="#c8c8c8"/>
<rect x="845.9" y="392.5" width="2" height="1" fill="#c8c8c8"/>
<rect x="853.7" y="368.7" width="1.8" height="47.2" fill="#ff1e1e"/>
<rect x="851.7" y="380.0" width="2" height="1" fill="#ff6060"/>
<rect x="855.5" y="403.6" width="2" height="1" fill="#ff6060"/>
<rect x="862.3" y="384.8" width="1.8" height="36.6" fill="#ff1e1e"/>
<rect x="860.3" y="393.4" width="2" height="1" fill="#ff6060"/>
<rect x="864.1" y="411.8" width="2" height="1" fill="#ff6060"/>
<rect x="872.0" y="391.7" width="1.8" height="50.2" fill="#ff1e1e"/>
<rect x="870.0" y="403.8" width="2" height="1" fill="#ff6060"/>
<rect x="873.8" y="428.8" width="2" height="1" fill="#ff6060"/>
<rect x="881.7" y="415.9" width="1.8" height="27.3" fill="#ff1e1e"/>
<rect x="879.7" y="422.2" width="2" height="1" fill="#ff6060"/>
<rect x="883.5" y="435.9" width="2" height="1" fill="#ff6060"/>
<rect x="891.2" y="435.1" width="1.8" height="35.4" fill="#ff1e1e"/>
<rect x="889.2" y="443.5" width="2" height="1" fill="#ff6060"/>
<rect x="893.0" y="461.1" width="2" height="1" fill="#ff6060"/>
<rect x="900.3" y="445.6" width="1.8" height="18.0" fill="#ff1e1e"/>
<rect x="898.3" y="449.6" width="2" height="1" fill="#ff6060"/>
<rect x="902.1" y="458.6" width="2" height="1" fill="#ff6060"/>
<rect x="910.0" y="451.2" width="1.8" height="22.3" fill="#ffffff"/>
<rect x="908.0" y="467.4" width="2" height="1" fill="#c8c8c8"/>
<rect x="911.8" y="456.3" width="2" height="1" fill="#c8c8c8"/>
<rect x="919.1" y="423.2" width="1.8" height="42.9" fill="#ffffff"/>
<rect x="917.1" y="454.9" width="2" height="1" fill="#c8c8c8"/>
<rect x="920.9" y="433.4" width="2" height="1" fill="#c8c8c8"/>
<rect x="928.6" y="421.4" width="1.8" height="60.2" fill="#ff1e1e"/>
<rect x="926.6" y="435.9" width="2" height="1" fill="#ff6060"/>
<rect x="930.4" y="466.1" width="2" height="1" fill="#ff6060"/>
<rect x="938.1" y="458.6" width="1.8" height="25.5" fill="#ffffff"/>
<rect x="936.1" y="477.2" width="2" height="1" fill="#c8c8c8"/>
<rect x="939.9" y="464.5" width="2" height="1" fill="#c8c8c8"/>
<rect x="947.4" y="433.2" width="1.8" height="34.7" fill="#ffffff"/>
<rect x="945.4" y="458.7" width="2" height="1" fill="#c8c8c8"/>
<rect x="949.2" y="441.4" width="2" height="1" fill="#c8c8c8"/>
<rect x="957.0" y="428.2" width="1.8" height="26.7" fill="#ffffff"/>
<rect x="955.0" y="447.7" width="2" height="1" fill="#c8c8c8"/>
<rect x="958.8" y="434.4" width="2" height="1" fill="#c8c8c8"/>
<rect x="966.1" y="435.6" width="1.8" height="28.0" fill="#ff1e1e"/>
<rect x="964.1" y="442.1" width="2" height="1" fill="#ff6060"/>
<rect x="967.9" y="456.1" width="2" height="1" fill="#ff6060"/>
<rect x="975.6" y="416.4" width="1.8" height="32.9" fill="#ffffff"/>
<rect x="973.6" y="440.6" width="2" height="1" fill="#c8c8c8"/>
<rect x="977.4" y="424.1" width="2" height="1" fill="#c8c8c8"/>
<rect x="984.9" y="392.2" width="1.8" height="35.4" fill="#ffffff"/>
<rect x="982.9" y="418.2" width="2" height="1" fill="#c8c8c8"/>
<rect x="986.7" y="400.6" width="2" height="1" fill="#c8c8c8"/>
<rect x="994.4" y="395.3" width="1.8" height="33.5" fill="#ffffff"/>
<rect x="992.4" y="419.9" width="2" height="1" fill="#c8c8c8"/>
<rect x="996.2" y="403.2" width="2" height="1" fill="#c8c8c8"/>
<rect x="1003.9" y="391.6" width="1.8" height="22.3" fill="#ffffff"/>
<rect x="1001.9" y="407.8" width="2" height="1" fill="#c8c8c8"/>
<rect x="1005.7" y="396.7" width="2" height="1" fill="#c8c8c8"/>
<rect x="1013.2" y="399.0" width="1.8" height="33.5" fill="#ff1e1e"/>
<rect x="1011.2" y="406.9" width="2" height="1" fill="#ff6060"/>
<rect x="1015.0" y="423.6" width="2" height="1" fill="#ff6060"/>
<rect x="1022.9" y="409.0" width="1.8" height="36.6" fill="#ffffff"/>
<rect x="1020.9" y="436.0" width="2" height="1" fill="#c8c8c8"/>
<rect x="1024.7" y="417.6" width="2" height="1" fill="#c8c8c8"/>
<rect x="1031.9" y="405.2" width="1.8" height="23.0" fill="#ff1e1e"/>
<rect x="1029.9" y="410.4" width="2" height="1" fill="#ff6060"/>
<rect x="1033.7" y="421.9" width="2" height="1" fill="#ff6060"/>
<rect x="1041.2" y="394.1" width="1.8" height="40.9" fill="#ffffff"/>
<rect x="1039.2" y="424.3" width="2" height="1" fill="#c8c8c8"/>
<rect x="1043.0" y="403.8" width="2" height="1" fill="#c8c8c8"/>
<rect x="1050.8" y="388.4" width="1.8" height="25.2" fill="#ff1e1e"/>
<rect x="1048.8" y="394.2" width="2" height="1" fill="#ff6060"/>
<rect x="1052.6" y="406.8" width="2" height="1" fill="#ff6060"/>
<rect x="1060.4" y="367.2" width="1.8" height="39.9" fill="#ffffff"/>
<rect x="1058.4" y="396.6" width="2" height="1" fill="#c8c8c8"/>
<rect x="1062.2" y="376.7" width="2" height="1" fill="#c8c8c8"/>
<rect x="1070.1" y="337.1" width="1.8" height="50.5" fill="#ffffff"/>
<rect x="1068.1" y="374.5" width="2" height="1" fill="#c8c8c8"/>
<rect x="1071.9" y="349.2" width="2" height="1" fill="#c8c8c8"/>
<rect x="1079.1" y="328.1" width="1.8" height="23.6" fill="#ffffff"/>
<rect x="1077.1" y="345.3" width="2" height="1" fill="#c8c8c8"/>
<rect x="1080.9" y="333.5" width="2" height="1" fill="#c8c8c8"/>
<rect x="1088.5" y="313.5" width="1.8" height="26.8" fill="#ffffff"/>
<rect x="1086.5" y="333.1" width="2" height="1" fill="#c8c8c8"/>
<rect x="1090.3" y="319.7" width="2" height="1" fill="#c8c8c8"/>
<rect x="1096.4" y="299.6" width="1.8" height="51.3" fill="#ff1e1e"/>
<rect x="1094.4" y="311.9" width="2" height="1" fill="#ff6060"/>
<rect x="1098.2" y="337.6" width="2" height="1" fill="#ff6060"/>
<rect x="1106.0" y="323.2" width="1.8" height="22.8" fill="#ffffff"/>
<rect x="1104.0" y="339.8" width="2" height="1" fill="#c8c8c8"/>
<rect x="1107.8" y="328.4" width="2" height="1" fill="#c8c8c8"/>
<rect x="1115.4" y="286.6" width="1.8" height="44.8" fill="#ffffff"/>
<rect x="1113.4" y="319.7" width="2" height="1" fill="#c8c8c8"/>
<rect x="1117.2" y="297.3" width="2" height="1" fill="#c8c8c8"/>
<rect x="1124.4" y="226.3" width="1.8" height="63.5" fill="#ffffff"/>
<rect x="1122.4" y="273.4" width="2" height="1" fill="#c8c8c8"/>
<rect x="1126.2" y="241.7" width="2" height="1" fill="#c8c8c8"/>
<rect x="1134.0" y="220.5" width="1.8" height="32.3" fill="#ff1e1e"/>
<rect x="1132.0" y="228.1" width="2" height="1" fill="#ff6060"/>
<rect x="1135.8" y="244.2" width="2" height="1" fill="#ff6060"/>
<rect x="1143.5" y="221.7" width="1.8" height="46.0" fill="#ff1e1e"/>
<rect x="1141.5" y="232.7" width="2" height="1" fill="#ff6060"/>
<rect x="1145.3" y="255.7" width="2" height="1" fill="#ff6060"/>
<rect x="1153.0" y="232.9" width="1.8" height="26.7" fill="#ffffff"/>
<rect x="1151.0" y="252.4" width="2" height="1" fill="#c8c8c8"/>
<rect x="1154.8" y="239.1" width="2" height="1" fill="#c8c8c8"/>
<rect x="1162.6" y="231.7" width="1.8" height="25.4" fill="#ff1e1e"/>
<rect x="1160.6" y="237.6" width="2" height="1" fill="#ff6060"/>
<rect x="1164.4" y="250.2" width="2" height="1" fill="#ff6060"/>
<rect x="1172.0" y="245.3" width="1.8" height="33.5" fill="#ff1e1e"/>
<rect x="1170.0" y="253.2" width="2" height="1" fill="#ff6060"/>
<rect x="1173.8" y="269.9" width="2" height="1" fill="#ff6060"/>
<rect x="1181.0" y="263.9" width="1.8" height="52.8" fill="#ff1e1e"/>
<rect x="1179.0" y="276.6" width="2" height="1" fill="#ff6060"/>
<rect x="1182.8" y="303.0" width="2" height="1" fill="#ff6060"/>
<rect x="1190.7" y="292.5" width="1.8" height="23.0" fill="#ffffff"/>
<rect x="1188.7" y="309.2" width="2" height="1" fill="#c8c8c8"/>
<rect x="1192.5" y="297.8" width="2" height="1" fill="#c8c8c8"/>
<rect x="1200.2" y="292.5" width="1.8" height="24.8" fill="#ff1e1e"/>
<rect x="1198.2" y="298.2" width="2" height="1" fill="#ff6060"/>
<rect x="1202.0" y="310.6" width="2" height="1" fill="#ff6060"/>
<rect x="1209.5" y="271.4" width="1.8" height="50.9" fill="#ffffff"/>
<rect x="1207.5" y="309.1" width="2" height="1" fill="#c8c8c8"/>
<rect x="1211.3" y="283.6" width="2" height="1" fill="#c8c8c8"/>
<rect x="1218.8" y="277.6" width="1.8" height="36.0" fill="#ff1e1e"/>
<rect x="1216.8" y="286.1" width="2" height="1" fill="#ff6060"/>
<rect x="1220.6" y="304.1" width="2" height="1" fill="#ff6060"/>
<rect x="1228.1" y="275.7" width="1.8" height="20.5" fill="#ffffff"/>
<rect x="1226.1" y="290.6" width="2" height="1" fill="#c8c8c8"/>
<rect x="1229.9" y="280.3" width="2" height="1" fill="#c8c8c8"/>
<rect x="1237.5" y="259.6" width="1.8" height="21.7" fill="#ffffff"/>
<rect x="1235.5" y="275.4" width="2" height="1" fill="#c8c8c8"/>
<rect x="1239.3" y="264.5" width="2" height="1" fill="#c8c8c8"/>
<rect x="1247.0" y="256.5" width="1.8" height="18.6" fill="#ffffff"/>
<rect x="1245.0" y="270.0" width="2" height="1" fill="#c8c8c8"/>
<rect x="1248.8" y="260.6" width="2" height="1" fill="#c8c8c8"/>
<rect x="1256.7" y="249.0" width="1.8" height="15.6" fill="#ffffff"/>
<rect x="1254.7" y="260.2" width="2" height="1" fill="#c8c8c8"/>
<rect x="1258.5" y="252.4" width="2" height="1" fill="#c8c8c8"/>
<path d="M0.0,569.4 C3.2,569.1 12.9,568.0 19.4,567.5 C25.9,567.0 29.1,566.6 38.8,566.5 C48.5,566.4 66.3,566.6 77.6,567.1 C88.9,567.6 97.0,568.0 106.7,569.4 C116.4,570.8 126.1,572.6 135.8,575.2 C145.5,577.8 156.9,582.1 165.0,585.0 C173.1,587.9 177.9,589.6 184.4,592.7 C190.9,595.8 197.3,599.8 203.8,603.4 C210.3,607.0 216.7,610.5 223.2,614.1 C229.7,617.7 236.1,621.6 242.6,624.8 C249.1,628.0 255.5,631.1 262.0,633.5 C268.5,635.9 274.9,637.8 281.4,639.3 C287.9,640.8 293.6,640.9 300.8,642.2 C308.0,643.5 316.4,645.5 324.3,647.3 C332.2,649.1 340.4,651.6 348.5,652.9 C356.6,654.2 362.7,654.9 372.8,655.3 C382.9,655.7 397.1,655.1 409.2,655.3 C421.3,655.5 433.4,656.1 445.5,656.5 C457.6,656.9 471.8,657.4 481.9,657.7 C492.0,658.0 494.4,658.3 506.2,658.2 C518.0,658.1 540.2,657.7 552.8,657.2 C565.4,656.8 574.6,656.1 581.9,655.5 C589.2,654.9 590.3,654.9 596.4,653.6 C602.5,652.3 611.0,649.6 618.3,647.8 C625.6,646.0 632.8,644.7 640.1,642.7 C647.4,640.8 654.6,638.5 661.9,636.1 C669.2,633.7 676.7,630.5 683.8,628.1 C690.9,625.7 696.8,624.3 704.3,621.6 C711.8,618.9 720.4,615.3 728.5,611.9 C736.6,608.5 744.7,604.2 752.8,601.0 C760.9,597.8 768.9,595.7 777.0,592.5 C785.1,589.3 793.2,585.2 801.3,581.6 C809.4,578.0 817.4,574.8 825.5,570.7 C833.6,566.7 841.7,561.8 849.8,557.3 C857.9,552.8 866.0,548.0 874.1,544.0 C882.2,540.0 890.2,536.3 898.3,533.1 C906.4,529.9 915.6,526.8 922.6,524.6 C929.6,522.4 930.6,522.6 940.0,519.9 C949.4,517.2 965.9,512.0 978.8,508.3 C991.7,504.6 1007.9,500.4 1017.6,497.6 C1027.3,494.8 1030.5,493.7 1037.0,491.3 C1043.5,488.9 1050.0,485.8 1056.5,483.0 C1063.0,480.2 1068.7,477.9 1075.9,474.3 C1083.2,470.8 1090.8,466.8 1100.0,461.7 C1109.2,456.6 1120.4,450.4 1131.0,443.5 C1141.6,436.6 1154.2,426.6 1163.7,420.6 C1173.2,414.6 1180.1,411.7 1188.3,407.5 C1196.5,403.3 1204.7,399.2 1212.9,395.2 C1221.1,391.2 1230.0,387.2 1237.4,383.7 C1244.8,380.1 1253.8,375.5 1257.1,373.9" fill="none" stroke="#e0da1c" stroke-width="2" stroke-linecap="round"/>
<polyline points="1106.5,235.8 1202.6,345 1265.7,268.9 1355,462" fill="none" stroke="#1f62ee" stroke-width="2.8" stroke-dasharray="6,3"/>
<text x="1202" y="371" fill="#1f5fd8" font-size="20" text-anchor="middle" font-family="Liberation Sans">a</text>
<text x="1268" y="296" fill="#1f5fd8" font-size="20" text-anchor="middle" font-family="Liberation Sans">b</text>
<text x="1351" y="486" fill="#1f5fd8" font-size="20" text-anchor="middle" font-family="Liberation Sans">c</text>
</g>
<rect x="0" y="827" width="1649" height="3" fill="#3a3f46"/>
<rect x="0" y="830" width="1649" height="310" fill="#000"/>
<g clip-path="url(#ic)">
<polygon points="0,1140 0,962.5 0.5,962.5 9.8,968.0 19.1,988.7 28.6,871.3 38.4,869.4 47.7,907.2 56.8,922.7 65.0,891.7 74.5,906.3 83.8,902.4 93.2,891.7 102.9,901.4 112.2,867.1 121.6,893.6 130.9,913.0 140.4,927.6 149.7,951.8 159.0,924.7 168.0,973.2 177.6,993.6 187.6,1011.0 196.9,990.6 206.4,938.3 215.7,944.7 224.9,980.4 234.7,986.8 244.0,988.1 253.4,985.8 262.7,1005.6 272.0,987.7 281.7,993.9 291.0,1028.5 300.5,973.2 310.2,970.7 319.0,951.8 328.3,957.7 338.2,929.9 347.5,930.5 356.8,934.4 366.5,958.6 375.8,979.6 385.1,986.8 394.6,991.2 403.9,1007.1 413.1,979.0 422.9,990.1 431.9,940.6 441.5,961.5 450.9,971.8 460.5,969.3 470.0,979.0 479.3,943.5 489.1,949.9 497.9,961.5 507.2,974.2 517.0,983.9 526.5,1003.2 536.1,1015.9 544.9,979.0 554.4,996.5 563.8,969.9 573.6,981.9 581.2,986.8 590.3,996.5 599.7,950.9 608.9,935.4 618.9,961.5 628.6,970.4 637.9,982.1 646.9,1009.2 657.1,1006.9 665.8,1028.6 675.1,1021.8 685.0,961.7 694.1,994.7 703.0,1016.0 713.0,1000.5 722.6,1003.4 732.2,1028.2 741.5,1026.3 750.8,1033.5 759.5,1041.8 769.2,1043.8 778.8,1049.0 788.5,1059.3 797.8,1062.6 806.9,1069.0 816.4,1065.9 826.0,1084.9 835.4,1107.2 845.0,1030.6 854.6,1005.4 863.2,1003.4 872.9,977.8 882.6,993.7 892.1,994.7 901.2,1024.8 910.9,1045.1 920.0,1027.7 929.5,980.1 939.0,999.8 948.3,1002.5 957.9,1018.3 967.0,1033.1 976.5,1033.1 985.8,1028.7 995.3,1030.3 1004.8,1051.4 1014.1,1046.6 1023.8,1041.2 1032.8,1061.9 1042.1,1047.7 1051.7,1063.0 1061.3,1043.4 1071.0,1013.4 1080.0,1029.2 1089.4,1044.9 1097.3,1020.4 1106.9,1039.7 1116.3,1018.3 1125.3,964.8 1134.9,972.4 1144.4,954.9 1153.9,971.3 1163.5,994.2 1172.9,999.7 1181.9,965.9 1191.6,994.2 1201.1,1010.6 1210.4,982.2 1219.7,981.8 1229.0,1011.7 1238.4,1039.0 1247.9,1061.9 1257.6,1088.1 1257.6,1140" fill="url(#ig)"/>
<rect x="0" y="835" width="1578" height="1" fill="#fff" fill-opacity="0.14"/>
<rect x="0" y="885" width="1578" height="1" fill="#fff" fill-opacity="0.14"/>
<rect x="0" y="937" width="1578" height="1" fill="#fff" fill-opacity="0.14"/>
<rect x="0" y="987" width="1578" height="1" fill="#fff" fill-opacity="0.14"/>
<rect x="0" y="1039" width="1578" height="1" fill="#fff" fill-opacity="0.14"/>
<rect x="0" y="1089" width="1578" height="1" fill="#fff" fill-opacity="0.14"/>
<polyline points="0,962.5 0.5,962.5 9.8,968.0 19.1,988.7 28.6,871.3 38.4,869.4 47.7,907.2 56.8,922.7 65.0,891.7 74.5,906.3 83.8,902.4 93.2,891.7 102.9,901.4 112.2,867.1 121.6,893.6 130.9,913.0 140.4,927.6 149.7,951.8 159.0,924.7 168.0,973.2 177.6,993.6 187.6,1011.0 196.9,990.6 206.4,938.3 215.7,944.7 224.9,980.4 234.7,986.8 244.0,988.1 253.4,985.8 262.7,1005.6 272.0,987.7 281.7,993.9 291.0,1028.5 300.5,973.2 310.2,970.7 319.0,951.8 328.3,957.7 338.2,929.9 347.5,930.5 356.8,934.4 366.5,958.6 375.8,979.6 385.1,986.8 394.6,991.2 403.9,1007.1 413.1,979.0 422.9,990.1 431.9,940.6 441.5,961.5 450.9,971.8 460.5,969.3 470.0,979.0 479.3,943.5 489.1,949.9 497.9,961.5 507.2,974.2 517.0,983.9 526.5,1003.2 536.1,1015.9 544.9,979.0 554.4,996.5 563.8,969.9 573.6,981.9 581.2,986.8 590.3,996.5 599.7,950.9 608.9,935.4 618.9,961.5 628.6,970.4 637.9,982.1 646.9,1009.2 657.1,1006.9 665.8,1028.6 675.1,1021.8 685.0,961.7 694.1,994.7 703.0,1016.0 713.0,1000.5 722.6,1003.4 732.2,1028.2 741.5,1026.3 750.8,1033.5 759.5,1041.8 769.2,1043.8 778.8,1049.0 788.5,1059.3 797.8,1062.6 806.9,1069.0 816.4,1065.9 826.0,1084.9 835.4,1107.2 845.0,1030.6 854.6,1005.4 863.2,1003.4 872.9,977.8 882.6,993.7 892.1,994.7 901.2,1024.8 910.9,1045.1 920.0,1027.7 929.5,980.1 939.0,999.8 948.3,1002.5 957.9,1018.3 967.0,1033.1 976.5,1033.1 985.8,1028.7 995.3,1030.3 1004.8,1051.4 1014.1,1046.6 1023.8,1041.2 1032.8,1061.9 1042.1,1047.7 1051.7,1063.0 1061.3,1043.4 1071.0,1013.4 1080.0,1029.2 1089.4,1044.9 1097.3,1020.4 1106.9,1039.7 1116.3,1018.3 1125.3,964.8 1134.9,972.4 1144.4,954.9 1153.9,971.3 1163.5,994.2 1172.9,999.7 1181.9,965.9 1191.6,994.2 1201.1,1010.6 1210.4,982.2 1219.7,981.8 1229.0,1011.7 1238.4,1039.0 1247.9,1061.9 1257.6,1088.1" fill="none" stroke="#e4e4e4" stroke-width="1.5" stroke-linejoin="round"/>
<rect x="1229" y="1087" width="65" height="25" fill="#0c0000" stroke="#e82020" stroke-width="1.8"/>
</g>
<rect x="1577" y="129" width="3" height="1016" fill="#4a4a4a"/>
<rect x="1578" y="165" width="7" height="1" fill="#6a6a6a"/>
<rect x="1578" y="192" width="4" height="1" fill="#5a5a5a"/>
<rect x="1578" y="220" width="7" height="1" fill="#6a6a6a"/>
<rect x="1578" y="247" width="4" height="1" fill="#5a5a5a"/>
<rect x="1578" y="274" width="7" height="1" fill="#6a6a6a"/>
<rect x="1578" y="301" width="4" height="1" fill="#5a5a5a"/>
<rect x="1578" y="328" width="7" height="1" fill="#6a6a6a"/>
<rect x="1578" y="355" width="4" height="1" fill="#5a5a5a"/>
<rect x="1578" y="383" width="7" height="1" fill="#6a6a6a"/>
<rect x="1578" y="410" width="4" height="1" fill="#5a5a5a"/>
<rect x="1578" y="438" width="7" height="1" fill="#6a6a6a"/>
<rect x="1578" y="465" width="4" height="1" fill="#5a5a5a"/>
<rect x="1578" y="492" width="7" height="1" fill="#6a6a6a"/>
<rect x="1578" y="519" width="4" height="1" fill="#5a5a5a"/>
<rect x="1578" y="547" width="7" height="1" fill="#6a6a6a"/>
<rect x="1578" y="574" width="4" height="1" fill="#5a5a5a"/>
<rect x="1578" y="601" width="7" height="1" fill="#6a6a6a"/>
<rect x="1578" y="628" width="4" height="1" fill="#5a5a5a"/>
<rect x="1578" y="656" width="7" height="1" fill="#6a6a6a"/>
<rect x="1578" y="683" width="4" height="1" fill="#5a5a5a"/>
<rect x="1578" y="710" width="7" height="1" fill="#6a6a6a"/>
<rect x="1578" y="737" width="4" height="1" fill="#5a5a5a"/>
<rect x="1578" y="765" width="7" height="1" fill="#6a6a6a"/>
<rect x="1578" y="792" width="4" height="1" fill="#5a5a5a"/>
<rect x="1578" y="819" width="7" height="1" fill="#6a6a6a"/>
<rect x="1578" y="138" width="4" height="1" fill="#5a5a5a"/>
<rect x="1578" y="835" width="7" height="1" fill="#6a6a6a"/>
<rect x="1578" y="860" width="4" height="1" fill="#5a5a5a"/>
<rect x="1578" y="885" width="7" height="1" fill="#6a6a6a"/>
<rect x="1578" y="911" width="4" height="1" fill="#5a5a5a"/>
<rect x="1578" y="937" width="7" height="1" fill="#6a6a6a"/>
<rect x="1578" y="962" width="4" height="1" fill="#5a5a5a"/>
<rect x="1578" y="987" width="7" height="1" fill="#6a6a6a"/>
<rect x="1578" y="1013" width="4" height="1" fill="#5a5a5a"/>
<rect x="1578" y="1039" width="7" height="1" fill="#6a6a6a"/>
<rect x="1578" y="1064" width="4" height="1" fill="#5a5a5a"/>
<rect x="1578" y="1089" width="7" height="1" fill="#6a6a6a"/>
<rect x="1578" y="1114" width="4" height="1" fill="#5a5a5a"/>
<rect x="1578" y="1140" width="7" height="1" fill="#6a6a6a"/>
<rect x="0" y="1140" width="1649" height="1" fill="#2a2c30"/>
<rect x="0" y="1141" width="1649" height="4" fill="#000"/>
</svg>
<div class="a" style="left:85px;top:95px;font-size:18px;font-weight:bold;color:#b4b8be">Jun</div>
<div class="a" style="left:292px;top:95px;font-size:18px;font-weight:bold;color:#b4b8be">Jul</div>
<div class="a" style="left:490px;top:95px;font-size:18px;font-weight:bold;color:#b4b8be">Aug</div>
<div class="a" style="left:705px;top:95px;font-size:18px;font-weight:bold;color:#b4b8be">Sep</div>
<div class="a" style="left:902px;top:95px;font-size:18px;font-weight:bold;color:#b4b8be">Okt</div>
<div class="a" style="left:1108px;top:95px;font-size:18px;font-weight:bold;color:#b4b8be">Nov</div>
<div class="a" style="left:1315px;top:95px;font-size:18px;font-weight:bold;color:#b4b8be">Dez</div>
<div class="a" style="left:1512px;top:95px;font-size:18px;font-weight:bold;color:#b4b8be">2018</div>
<div class="a" style="left:1580px;top:129px;width:69px;height:698px;overflow:hidden">
<div class="a" style="left:8px;top:24px;font-size:18px;font-weight:bold;color:#b4b8be">67,000</div>
<div class="a" style="left:8px;top:78px;font-size:18px;font-weight:bold;color:#b4b8be">65,000</div>
<div class="a" style="left:8px;top:132px;font-size:18px;font-weight:bold;color:#b4b8be">63,000</div>
<div class="a" style="left:8px;top:186px;font-size:18px;font-weight:bold;color:#b4b8be">61,000</div>
<div class="a" style="left:8px;top:242px;font-size:18px;font-weight:bold;color:#b4b8be">59,000</div>
<div class="a" style="left:8px;top:296px;font-size:18px;font-weight:bold;color:#b4b8be">57,000</div>
<div class="a" style="left:8px;top:350px;font-size:18px;font-weight:bold;color:#b4b8be">55,000</div>
<div class="a" style="left:8px;top:406px;font-size:18px;font-weight:bold;color:#b4b8be">53,000</div>
<div class="a" style="left:8px;top:460px;font-size:18px;font-weight:bold;color:#b4b8be">51,000</div>
<div class="a" style="left:8px;top:514px;font-size:18px;font-weight:bold;color:#b4b8be">49,000</div>
<div class="a" style="left:8px;top:568px;font-size:18px;font-weight:bold;color:#b4b8be">47,000</div>
<div class="a" style="left:8px;top:624px;font-size:18px;font-weight:bold;color:#b4b8be">45,000</div>
<div class="a" style="left:8px;top:678px;font-size:18px;font-weight:bold;color:#b4b8be">43,000</div>
</div>
<div class="a" style="left:1580px;top:830px;width:69px;height:310px;overflow:hidden">
<div class="a" style="left:8px;top:-8px;font-size:18px;font-weight:bold;color:#b4b8be">1,600</div>
<div class="a" style="left:8px;top:43px;font-size:18px;font-weight:bold;color:#b4b8be">1,500</div>
<div class="a" style="left:8px;top:94px;font-size:18px;font-weight:bold;color:#b4b8be">1,400</div>
<div class="a" style="left:8px;top:145px;font-size:18px;font-weight:bold;color:#b4b8be">1,300</div>
<div class="a" style="left:8px;top:196px;font-size:18px;font-weight:bold;color:#b4b8be">1,200</div>
<div class="a" style="left:8px;top:246px;font-size:18px;font-weight:bold;color:#b4b8be">1,100</div>
<div class="a" style="left:8px;top:297px;font-size:18px;font-weight:bold;color:#b4b8be">1,000</div>
</div>
<div class="a" style="left:1567px;top:244px;width:76px;height:27px;border-radius:5px;background:#0a9c0a;color:#fff;font-size:17px;font-weight:bold;line-height:27px;text-align:center">63,6470</div>
<svg class="a" style="left:1553px;top:358px" width="96" height="32"><path d="M0 16 L17 0 H96 V32 H17Z" fill="#f4ee00"/></svg><div class="a" style="left:1588px;top:363px;font-size:17px;font-weight:bold;color:#222">59,328</div>
<svg class="a" style="left:1554px;top:1073px" width="95" height="32"><path d="M0 16 L17 0 H95 V32 H17Z" fill="#fff"/></svg><div class="a" style="left:1594px;top:1078px;font-size:17px;color:#111">1,099</div>
<div class="a" style="left:0;top:1145px;width:1649px;height:5px;background:linear-gradient(#34373d,#4a4e56)"></div>
<div class="a" style="left:0;top:1150px;width:1649px;height:105px;background-color:#020203;background-image:repeating-conic-gradient(#020203 0 25%,#36383c 0 50%);background-size:3.2px 3.2px"></div>
<div class="a" style="left:36px;top:1167px;width:63px;height:63px;border-radius:6px;background:linear-gradient(#4c4f54 0%,#3b3d42 30%,#242629 75%,#1d1f22 100%);box-shadow:inset 0 1px 0 #7a7e84,0 1px 2px #000;overflow:hidden"><svg width="63" height="63"><path d="M3 28 L62 13 M3 38 L62 24 M3 48 L62 35" stroke="#3ec4cc" stroke-width="2.2"/><circle cx="7" cy="38" r="3" fill="#fff" stroke="#222" stroke-width="1"/><circle cx="55" cy="24" r="3" fill="#fff" stroke="#222" stroke-width="1"/></svg></div>
<div class="a" style="left:26px;top:1236px;width:95px;text-align:center;color:#fff;font-size:15.5px;white-space:nowrap">Raff</div>
<div class="a" style="left:130px;top:1167px;width:63px;height:63px;border-radius:6px;background:linear-gradient(#4c4f54 0%,#3b3d42 30%,#242629 75%,#1d1f22 100%);box-shadow:inset 0 1px 0 #7a7e84,0 1px 2px #000;overflow:hidden"><svg width="63" height="63"><rect x="11" y="16" width="41" height="31" fill="#2c4c52" fill-opacity="0.8"/><path d="M11.5 16 V47 M52 16 V47" stroke="#3ec4cc" stroke-width="2.2"/><path d="M14 31 H48" stroke="#3ec4cc" stroke-width="2" stroke-dasharray="3,2"/><path d="M44 27 L49 31 L44 35" fill="none" stroke="#3ec4cc" stroke-width="1.6"/><circle cx="12" cy="19" r="3" fill="#fff" stroke="#222" stroke-width="1"/><circle cx="52" cy="43" r="3" fill="#fff" stroke="#222" stroke-width="1"/></svg></div>
<div class="a" style="left:120px;top:1236px;width:95px;text-align:center;color:#fff;font-size:15.5px;white-space:nowrap">Zeitr.</div>
<div class="a" style="left:224px;top:1167px;width:63px;height:63px;border-radius:6px;background:linear-gradient(#4c4f54 0%,#3b3d42 30%,#242629 75%,#1d1f22 100%);box-shadow:inset 0 1px 0 #7a7e84,0 1px 2px #000;overflow:hidden"><svg width="63" height="63"><rect x="5" y="12" width="52" height="39" fill="#2c4c52" fill-opacity="0.8"/><path d="M5 12 H57 M5 51 H57" stroke="#3ec4cc" stroke-width="2.2"/><path d="M30 49 V16" stroke="#3ec4cc" stroke-width="2" stroke-dasharray="3,2"/><path d="M26 20 L30 15 L34 20" fill="none" stroke="#3ec4cc" stroke-width="1.6"/><circle cx="54" cy="12" r="3" fill="#fff" stroke="#222" stroke-width="1"/><circle cx="9" cy="51" r="3" fill="#fff" stroke="#222" stroke-width="1"/></svg></div>
<div class="a" style="left:214px;top:1236px;width:95px;text-align:center;color:#fff;font-size:15.5px;white-space:nowrap">Preissp.</div>
<div class="a" style="left:318px;top:1167px;width:63px;height:63px;border-radius:6px;background:linear-gradient(#4c4f54 0%,#3b3d42 30%,#242629 75%,#1d1f22 100%);box-shadow:inset 0 1px 0 #7a7e84,0 1px 2px #000;overflow:hidden"><svg width="63" height="63"><path d="M20 21 L63 11 M7 41 L63 28 M29 52 L63 45 M20 21 L29 52" stroke="#e8d41c" stroke-width="2"/><circle cx="20" cy="21" r="3" fill="#fff" stroke="#222" stroke-width="1"/><circle cx="7" cy="41" r="3" fill="#fff" stroke="#222" stroke-width="1"/><circle cx="29" cy="52" r="3" fill="#fff" stroke="#222" stroke-width="1"/></svg></div>
<div class="a" style="left:308px;top:1236px;width:95px;text-align:center;color:#fff;font-size:15.5px;white-space:nowrap">Andrew...</div>
<div class="a" style="left:413px;top:1167px;width:63px;height:63px;border-radius:6px;background:linear-gradient(#4c4f54 0%,#3b3d42 30%,#242629 75%,#1d1f22 100%);box-shadow:inset 0 1px 0 #7a7e84,0 1px 2px #000;overflow:hidden"><svg width="63" height="63"><circle cx="8" cy="33" r="2.5" fill="#fff"/><text x="15" y="40" fill="#fff" font-size="20" font-family="Liberation Sans">ABC</text></svg></div>
<div class="a" style="left:403px;top:1236px;width:95px;text-align:center;color:#fff;font-size:15.5px;white-space:nowrap">Achtung:</div>
<div class="a" style="left:507px;top:1167px;width:63px;height:63px;border-radius:6px;background:linear-gradient(#4c4f54 0%,#3b3d42 30%,#242629 75%,#1d1f22 100%);box-shadow:inset 0 1px 0 #7a7e84,0 1px 2px #000;overflow:hidden"><svg width="63" height="63"><path d="M11 51 L35 12" stroke="#ddd" stroke-width="1.5"/><path d="M35 12 H63 M11 51 H63" stroke="#fff" stroke-width="2.2"/><path d="M20 28 H63 M18 36 H63" stroke="#fff" stroke-width="2" stroke-dasharray="3,2"/><path d="M19 32 H63" stroke="#bbb" stroke-width="1" stroke-dasharray="3,2"/><circle cx="11" cy="51" r="3" fill="#fff" stroke="#222" stroke-width="1"/><circle cx="35" cy="12" r="3" fill="#fff" stroke="#222" stroke-width="1"/></svg></div>
<div class="a" style="left:497px;top:1236px;width:95px;text-align:center;color:#fff;font-size:15.5px;white-space:nowrap">Fibonacci</div>
<div class="a" style="left:601px;top:1167px;width:63px;height:63px;border-radius:6px;background:linear-gradient(#4c4f54 0%,#3b3d42 30%,#242629 75%,#1d1f22 100%);box-shadow:inset 0 1px 0 #7a7e84,0 1px 2px #000;overflow:hidden"><svg width="63" height="63"><path d="M11 51 L21 37" stroke="#ddd" stroke-width="1.5" stroke-dasharray="2,2"/><path d="M21 37 H63 M11 51 H63" stroke="#fff" stroke-width="2.2"/><path d="M28 28 H63 M35 12 H63" stroke="#fff" stroke-width="2" stroke-dasharray="3,2"/><path d="M28 32 H63" stroke="#bbb" stroke-width="1" stroke-dasharray="3,2"/><circle cx="11" cy="51" r="3" fill="#fff" stroke="#222" stroke-width="1"/><circle cx="21" cy="37" r="3" fill="#fff" stroke="#222" stroke-width="1"/></svg></div>
<div class="a" style="left:591px;top:1236px;width:95px;text-align:center;color:#fff;font-size:15.5px;white-space:nowrap">Fib Preis</div>
<div class="a" style="left:695px;top:1167px;width:63px;height:63px;border-radius:6px;background:linear-gradient(#4c4f54 0%,#3b3d42 30%,#242629 75%,#1d1f22 100%);box-shadow:inset 0 1px 0 #7a7e84,0 1px 2px #000;overflow:hidden"><svg width="63" height="63"><path d="M8 51 L38 0" stroke="#eee" stroke-width="1.5"/><path d="M8 51 L63 11 M8 51 L63 19 M8 51 L63 26 M8 51 L63 32" stroke="#999" stroke-width="1.1"/><path d="M8 51 H63" stroke="#fff" stroke-width="2.2"/><circle cx="8" cy="51" r="3" fill="#fff" stroke="#222" stroke-width="1"/></svg></div>
<div class="a" style="left:685px;top:1236px;width:95px;text-align:center;color:#fff;font-size:15.5px;white-space:nowrap">Fib Fan</div>
<div class="a" style="left:789px;top:1167px;width:63px;height:63px;border-radius:6px;background:linear-gradient(#4c4f54 0%,#3b3d42 30%,#242629 75%,#1d1f22 100%);box-shadow:inset 0 1px 0 #7a7e84,0 1px 2px #000;overflow:hidden"><svg width="63" height="63"><path d="M7.2 50.8 L22.7 20.8" stroke="#ddd" stroke-width="1.4"/><path d="M28.5 12.7 A10.4 10.4 0 0 1 18.4 30.8 M34.8 8.0 A18 18 0 0 1 14.9 37.5 M38.6 -0.2 A26.8 26.8 0 0 1 13.3 46.4 M51.0 1.2 A34.8 34.8 0 0 1 2.0 49.4" fill="none" stroke="#e0e0e0" stroke-width="1.5"/><circle cx="7.2" cy="50.8" r="3" fill="#fff" stroke="#222" stroke-width="1"/><circle cx="22.7" cy="20.8" r="3" fill="#fff" stroke="#222" stroke-width="1"/></svg></div>
<div class="a" style="left:779px;top:1236px;width:95px;text-align:center;color:#fff;font-size:15.5px;white-space:nowrap">Fib Arc</div>
<div class="a" style="left:883px;top:1167px;width:63px;height:63px;border-radius:6px;background:linear-gradient(#4c4f54 0%,#3b3d42 30%,#242629 75%,#1d1f22 100%);box-shadow:inset 0 1px 0 #7a7e84,0 1px 2px #000;overflow:hidden"><svg width="63" height="63"><path d="M7.3 50.8 L49.5 26.1" stroke="#ddd" stroke-width="1.4"/><path d="M13.0 36.0 A15.8 15.8 0 0 1 22.9 53.0 M15.0 30.8 A21.4 21.4 0 0 1 28.5 53.8 M18.1 22.6 A30.2 30.2 0 0 1 37.2 55.0 M24.7 5.5 A48.5 48.5 0 0 1 55.3 57.5" fill="none" stroke="#e0e0e0" stroke-width="1.5"/><circle cx="7.3" cy="50.8" r="3" fill="#fff" stroke="#222" stroke-width="1"/><circle cx="49.5" cy="26.1" r="3" fill="#fff" stroke="#222" stroke-width="1"/></svg></div>
<div class="a" style="left:873px;top:1236px;width:95px;text-align:center;color:#fff;font-size:15.5px;white-space:nowrap">Fib Spd</div>
<div class="a" style="left:978px;top:1167px;width:63px;height:63px;border-radius:6px;background:linear-gradient(#4c4f54 0%,#3b3d42 30%,#242629 75%,#1d1f22 100%);box-shadow:inset 0 1px 0 #7a7e84,0 1px 2px #000;overflow:hidden"><svg width="63" height="63"><path d="M6 53 L25 34" stroke="#ddd" stroke-width="1.5" stroke-dasharray="2,2"/><path d="M25.5 0 V63 M38 0 V63 M44 0 V63 M56.5 0 V63" stroke="#fff" stroke-width="2"/><circle cx="6.5" cy="53" r="3" fill="#fff" stroke="#222" stroke-width="1"/><circle cx="25.5" cy="34" r="3" fill="#fff" stroke="#222" stroke-width="1"/></svg></div>
<div class="a" style="left:968px;top:1236px;width:95px;text-align:center;color:#fff;font-size:15.5px;white-space:nowrap">Fib Zeit</div>
<div class="a" style="left:1072px;top:1167px;width:63px;height:63px;border-radius:6px;background:linear-gradient(#4c4f54 0%,#3b3d42 30%,#242629 75%,#1d1f22 100%);box-shadow:inset 0 1px 0 #7a7e84,0 1px 2px #000;overflow:hidden"><svg width="63" height="63"><path d="M11 0 V63" stroke="#fff" stroke-width="2"/><path d="M14.5 0 V63 M20.5 0 V63 M31.5 0 V63 M49.5 0 V63" stroke="#fff" stroke-width="1.8" stroke-dasharray="3,3"/><circle cx="11" cy="34" r="3" fill="#fff" stroke="#222" stroke-width="1"/></svg></div>
<div class="a" style="left:1062px;top:1236px;width:95px;text-align:center;color:#fff;font-size:15.5px;white-space:nowrap">Fib Cycle</div>
<div class="a" style="left:1166px;top:1167px;width:63px;height:63px;border-radius:6px;background:linear-gradient(#4c4f54 0%,#3b3d42 30%,#242629 75%,#1d1f22 100%);box-shadow:inset 0 1px 0 #7a7e84,0 1px 2px #000;overflow:hidden"><svg width="63" height="63"><path d="M10.6 31.6 L31.2 50.6 L50 11.2" fill="none" stroke="#e8d41c" stroke-width="2.2"/><circle cx="10.6" cy="31.6" r="3" fill="#fff" stroke="#222" stroke-width="1"/><circle cx="31.2" cy="50.6" r="3" fill="#fff" stroke="#222" stroke-width="1"/><circle cx="50" cy="11.2" r="3" fill="#fff" stroke="#222" stroke-width="1"/></svg></div>
<div class="a" style="left:1156px;top:1236px;width:95px;text-align:center;color:#fff;font-size:15.5px;white-space:nowrap">Mittlere ...</div>
<div class="a" style="left:1260px;top:1167px;width:63px;height:63px;border-radius:6px;background:linear-gradient(#4c4f54 0%,#3b3d42 30%,#242629 75%,#1d1f22 100%);box-shadow:inset 0 1px 0 #7a7e84,0 1px 2px #000;overflow:hidden"><svg width="63" height="63"><path d="M7.5 31.6 L19 50.6 L28.1 19.4 L40.2 30.3 L54.4 11.2" fill="none" stroke="#e8d41c" stroke-width="2.2"/><circle cx="7.5" cy="31.6" r="3" fill="#fff" stroke="#222" stroke-width="1"/><circle cx="19" cy="50.6" r="3" fill="#fff" stroke="#222" stroke-width="1"/><circle cx="28.1" cy="19.4" r="3" fill="#fff" stroke="#222" stroke-width="1"/><circle cx="40.2" cy="30.3" r="3" fill="#fff" stroke="#222" stroke-width="1"/><circle cx="54.4" cy="11.2" r="3" fill="#fff" stroke="#222" stroke-width="1"/></svg></div>
<div class="a" style="left:1250px;top:1236px;width:95px;text-align:center;color:#fff;font-size:15.5px;white-space:nowrap">Impulsw...</div>
<div class="a" style="left:1354px;top:1167px;width:63px;height:63px;border-radius:6px;background:linear-gradient(#4c4f54 0%,#3b3d42 30%,#242629 75%,#1d1f22 100%);box-shadow:inset 0 1px 0 #7a7e84,0 1px 2px #000;overflow:hidden"><svg width="63" height="63"><defs><linearGradient id="gk" x1="0" y1="0" x2="0" y2="1"><stop offset="0" stop-color="#8ae0ee"/><stop offset="1" stop-color="#2a9cbc"/></linearGradient><linearGradient id="gv" x1="0" y1="0" x2="0" y2="1"><stop offset="0" stop-color="#f8d8a0"/><stop offset="0.35" stop-color="#f0a030"/><stop offset="1" stop-color="#d07010"/></linearGradient><linearGradient id="gp" x1="0" y1="0" x2="0" y2="1"><stop offset="0" stop-color="#f8f060"/><stop offset="1" stop-color="#c8b800"/></linearGradient></defs><path d="M32.3 16.7 L44 34.8 L37.5 34.8 C37 41 32 46 23 48.5 C28 44 29.5 40 29 34.8 L21.5 34.8 Z" fill="url(#gk)" stroke="#06141a" stroke-width="1.2"/></svg></div>
<div class="a" style="left:1344px;top:1236px;width:95px;text-align:center;color:#fff;font-size:15.5px;white-space:nowrap">Kauf</div>
<div class="a" style="left:1448px;top:1167px;width:63px;height:63px;border-radius:6px;background:linear-gradient(#4c4f54 0%,#3b3d42 30%,#242629 75%,#1d1f22 100%);box-shadow:inset 0 1px 0 #7a7e84,0 1px 2px #000;overflow:hidden"><svg width="63" height="63"><path d="M22.6 18.3 C31 20 36 24 35.5 30.9 L44.7 30.9 L32 48.2 L21 30.9 L28.5 30.9 C28.5 26 26.5 21.5 22.6 18.3 Z" fill="url(#gv)" stroke="#1a0a00" stroke-width="1.2"/></svg></div>
<div class="a" style="left:1438px;top:1236px;width:95px;text-align:center;color:#fff;font-size:15.5px;white-space:nowrap">Verkauf</div>
<div class="a" style="left:1542px;top:1167px;width:63px;height:63px;border-radius:6px;background:linear-gradient(#4c4f54 0%,#3b3d42 30%,#242629 75%,#1d1f22 100%);box-shadow:inset 0 1px 0 #7a7e84,0 1px 2px #000;overflow:hidden"><svg width="63" height="63"><path d="M31.9 15.9 L42.9 32.5 L36.6 32.5 V49.8 H27.2 V32.5 H20.9 Z" fill="url(#gp)" stroke="#141400" stroke-width="1.2"/></svg></div>
<div class="a" style="left:1532px;top:1236px;width:95px;text-align:center;color:#fff;font-size:15.5px;white-space:nowrap">Pfeil</div>
<svg class="a" style="left:3px;top:1198px" width="26" height="36"><path d="M20.5 3.5 L6 17 L20.5 31" fill="none" stroke="#5a6878" stroke-width="4"/></svg>
<svg class="a" style="left:1621px;top:1198px" width="26" height="36"><path d="M5 3.5 L19.5 17 L5 31" fill="none" stroke="#5a6878" stroke-width="4"/></svg>
<div class="a" style="left:1616px;top:1154px;width:26px;height:25px;border-radius:4px;background:linear-gradient(#4a4d52,#2a2c30)"><svg width="26" height="25"><rect x="7" y="5" width="12" height="2" fill="#fff"/><path d="M10 9 H16 V13 H19 L13 19 L7 13 H10Z" fill="#fff"/></svg></div>
<div class="a" style="left:0;top:1255px;width:1649px;height:34px;background:linear-gradient(#3e4248,#2c2f34)"></div>
<div class="a" style="left:317px;top:1258px;width:25px;height:25px;border-radius:4px;background:linear-gradient(#46494e,#2d2f33);box-shadow:0 1px 2px #111"><svg width="25" height="25"><path d="M6 11 A7 7 0 0 1 18 8 M19 14 A7 7 0 0 1 7 17" fill="none" stroke="#fff" stroke-width="2.4"/><path d="M15 5 L20 9 L14 10Z M10 20 L5 16 L11 15Z" fill="#fff"/></svg></div>
<div class="a" style="left:349px;top:1258px;width:25px;height:25px;border-radius:4px;background:linear-gradient(#46494e,#2d2f33);box-shadow:0 1px 2px #111"><svg width="25" height="25"><circle cx="12.5" cy="12.5" r="8" fill="none" stroke="#fff" stroke-width="2.2"/><path d="M7 18 L18 7" stroke="#fff" stroke-width="2.2"/></svg></div>
<div class="a" style="left:380px;top:1258px;width:25px;height:25px;border-radius:4px;background:linear-gradient(#1a7ef2,#0c9cf2);box-shadow:0 1px 2px #111"><svg width="25" height="25"><path d="M7 19 L19 7" stroke="#fff" stroke-width="5"/><path d="M4 22 L7 17 L9 19Z" fill="#fff"/></svg></div>
<div class="a" style="left:411px;top:1258px;width:25px;height:25px;border-radius:4px;background:linear-gradient(#1a7ef2,#0c9cf2);box-shadow:0 1px 2px #111"><svg width="25" height="25"><path d="M12.5 4 L19 11 H6Z M12.5 21 L19 14 H6Z" fill="#fff"/></svg></div>
<div class="a" style="left:447px;top:1255px;width:125px;height:34px;background:linear-gradient(#575b62,#393c42);border-left:1px solid #2c2f34;color:#8e9298;font-weight:bold;font-size:17px;text-align:center;line-height:31px">Zeitraum</div>
<div class="a" style="left:572px;top:1255px;width:125px;height:34px;background:linear-gradient(#575b62,#393c42);border-left:1px solid #2c2f34;color:#8e9298;font-weight:bold;font-size:17px;text-align:center;line-height:31px">Chart Typ</div>
<div class="a" style="left:697px;top:1255px;width:131px;height:34px;background:linear-gradient(#575b62,#393c42);border-left:1px solid #2c2f34;color:#8e9298;font-weight:bold;font-size:17px;text-align:center;line-height:31px">Indikatoren</div>
<div class="a" style="left:828px;top:1255px;width:193px;height:34px;background:linear-gradient(#0a5cd4,#0e9ef0);color:#fff;font-weight:bold;font-size:17px;text-align:center;line-height:31px">Zeichenwerkzeuge</div>
<div class="a" style="left:1021px;top:1255px;width:125px;height:34px;background:linear-gradient(#575b62,#393c42);border-left:1px solid #2c2f34;color:#8e9298;font-weight:bold;font-size:17px;text-align:center;line-height:31px">Muster</div>
<div class="a" style="left:1158px;top:1258px;width:25px;height:25px;border-radius:4px;background:linear-gradient(#46494e,#2d2f33);box-shadow:0 1px 2px #111"><svg width="25" height="25"><circle cx="10.5" cy="10.5" r="5.5" fill="none" stroke="#fff" stroke-width="2"/><path d="M14.5 14.5 L20 20" stroke="#fff" stroke-width="2.6"/></svg></div>
<div class="a" style="left:1189px;top:1258px;width:25px;height:25px;border-radius:4px;background:linear-gradient(#46494e,#2d2f33);box-shadow:0 1px 2px #111"><svg width="25" height="25"><rect x="6" y="11" width="13" height="3" fill="#fff"/></svg></div>
<div class="a" style="left:1221px;top:1258px;width:25px;height:25px;border-radius:4px;background:linear-gradient(#46494e,#2d2f33);box-shadow:0 1px 2px #111"><svg width="25" height="25"><rect x="6" y="11" width="13" height="3" fill="#fff"/><rect x="11" y="6" width="3" height="13" fill="#fff"/></svg></div>
<div class="a" style="left:1252px;top:1258px;width:25px;height:25px;border-radius:4px;background:linear-gradient(#46494e,#2d2f33);box-shadow:0 1px 2px #111"><svg width="25" height="25"><path d="M3 12.5 H9 M16 12.5 H22 M12.5 3 V9 M12.5 16 V22" stroke="#ccc" stroke-width="1.2"/></svg></div>
<div class="a" style="left:1283px;top:1258px;width:25px;height:25px;border-radius:4px;background:linear-gradient(#1a7ef2,#0c9cf2);box-shadow:0 1px 2px #111"><svg width="25" height="25"><text x="12.5" y="13" fill="#fff" font-size="8" font-weight="bold" text-anchor="middle" font-family="Liberation Sans">1234</text><rect x="3" y="16" width="19" height="2" fill="#fff"/></svg></div>
</body></html>
